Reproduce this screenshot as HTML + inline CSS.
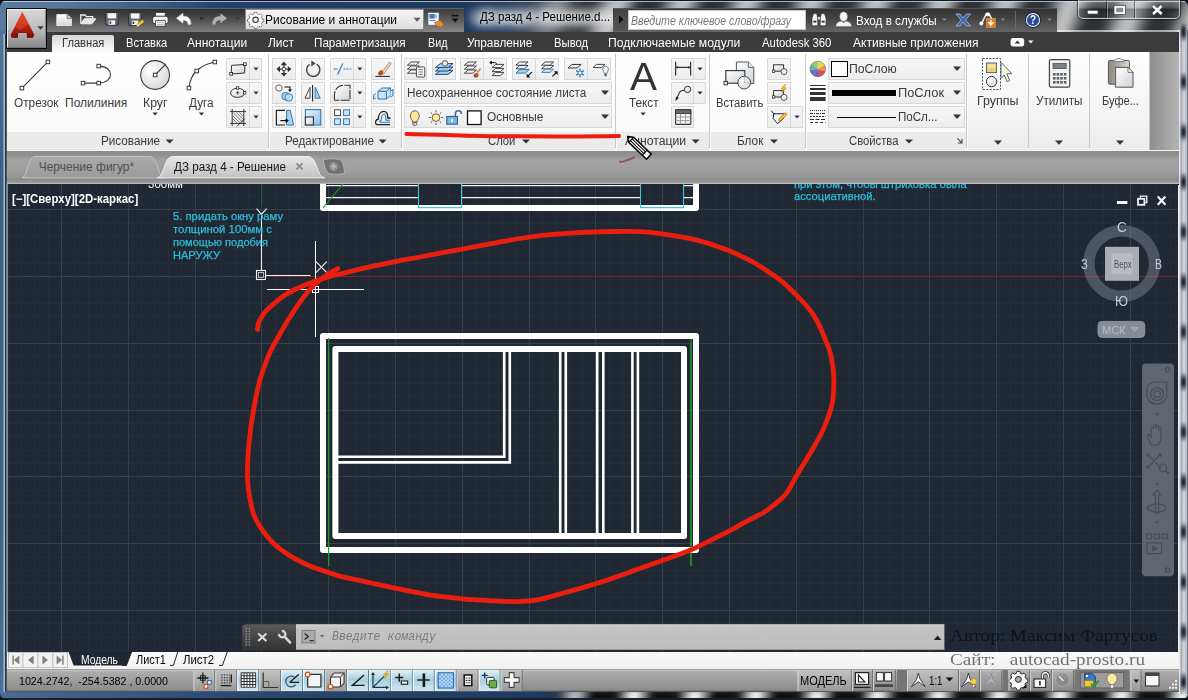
<!DOCTYPE html>
<html lang="ru"><head><meta charset="utf-8"><title>AutoCAD</title>
<style>
html,body{margin:0;padding:0;background:#2a2a2a;}
#root{position:relative;width:1188px;height:700px;overflow:hidden;background:#56769a;font-family:"Liberation Sans",sans-serif;}
#root div{position:absolute;box-sizing:border-box;}
.t{position:absolute;white-space:pre;transform-origin:0 50%;}
svg.ov{position:absolute;left:0;top:0;pointer-events:none;}
#dclip{left:7px;top:184px;width:1171px;height:468px;overflow:hidden;background:#202833;}
#dclip > svg.ov{left:-7px !important;top:-184px !important;}
#dclip > .t{margin-left:-7px;margin-top:-184px;}
.sb{background:linear-gradient(#f6f6f6,#ececec);border:1px solid #d9d9d9;}
.sb2{background:linear-gradient(#f6f6f6,#ececec);border:1px solid #d9d9d9;border-left:none;}
.sep{width:1px;background:#c9c9c9;top:54px;height:94px;}
.sep2{width:1px;background:#ffffff;top:54px;height:94px;}
.ptitle{top:132px;height:18px;background:#ebebeb;}

</style></head>
<body>
<div id="root">
<!-- window frame (aero glass) -->
<div id="fr-top" style="left:0;top:0;width:1188px;height:34px;background:linear-gradient(90deg,#5a7a9e 0,#56769a 60px,#3f5f86 140px,#21406a 230px,#1f3c62 430px,#1d3658 500px,#4f555e 560px,#62666c 640px,#64676c 1188px);"></div>
<div style="left:520px;top:-8px;width:680px;height:48px;overflow:hidden;filter:blur(4px);opacity:.62;background:repeating-linear-gradient(112deg,#0a0a0a 0,#161616 14px,#f0f0f0 29px,#ffffff 39px,#1a1a1a 54px,#0a0a0a 60px);-webkit-mask-image:linear-gradient(90deg,transparent 0,#000 70px);mask-image:linear-gradient(90deg,transparent 0,#000 70px);"></div>
<div style="left:1057px;top:30px;width:123px;height:1.500px;background:rgba(255,255,255,.55);"></div>
<div style="left:0;top:0;width:1188px;height:1px;background:#0d1824;"></div>
<div style="left:1px;top:1px;width:1186px;height:1px;background:rgba(220,232,245,.7);"></div>
<div id="fr-bot" style="left:0;top:691px;width:1188px;height:9px;background:linear-gradient(90deg,#4a6a90 0,#2d4d76 200px,#1d3a60 540px,#555 600px,#666 1188px);"></div>
<div style="left:540px;top:690px;width:660px;height:14px;overflow:hidden;filter:blur(2.5px);background:repeating-linear-gradient(100deg,#0c0c0c 0,#161616 16px,#e8e8e8 30px,#f0f0f0 36px,#141414 52px,#0c0c0c 60px);-webkit-mask-image:linear-gradient(90deg,transparent 0,#000 50px);mask-image:linear-gradient(90deg,transparent 0,#000 50px);"></div>
<div style="left:0;top:698px;width:1188px;height:2px;background:#15202e;"></div>
<div id="fr-right" style="left:1178px;top:30px;width:10px;height:664px;background:linear-gradient(90deg,#eef1f4 0,#e2e5e8 2px,#9a9ea4 3px,#c4c8cc 4.500px,#d0d4d8 6.500px,#a8acb2 8px,#e0e4e8 8.800px,#59626c 9.600px);"></div>
<div style="left:1181px;top:7px;width:5px;height:690px;filter:blur(1.200px);background:repeating-linear-gradient(180deg,rgba(20,24,44,0) 0,rgba(20,24,44,0) 15px,rgba(20,24,44,.95) 23px,rgba(20,24,44,.95) 27px,rgba(20,24,44,0) 35px,rgba(20,24,44,0) 50px);"></div>
<div style="left:0;top:30px;width:7px;height:664px;background:linear-gradient(#54759a 0,#3d628a 120px,#3d607f 300px,#436889 560px,#4b7199 664px);"></div>
<div style="left:3px;top:34px;width:3px;height:658px;background:linear-gradient(90deg,rgba(160,184,208,0) 0,rgba(160,184,208,.95) .800px,rgba(166,190,214,1) 2px,rgba(40,56,70,1) 2.300px,rgba(40,56,70,1) 3px);"></div>
<div style="left:6px;top:34px;width:1px;height:658px;background:#4a5a68;"></div>

<div id="title-glow" style="left:470px;top:9px;width:150px;height:18px;border-radius:9px;background:rgba(255,255,255,.5);filter:blur(5px);"></div>
<!-- caption buttons -->
<div style="left:1078px;top:0;width:102px;height:19px;border:1px solid rgba(230,235,240,.75);border-top:none;border-radius:0 0 5px 5px;background:linear-gradient(rgba(255,255,255,.35),rgba(255,255,255,.12) 45%,rgba(0,0,0,.25) 50%,rgba(60,60,60,.25));box-shadow:0 0 0 1px rgba(0,0,0,.55);"></div>
<div style="left:1105.5px;top:1px;width:1px;height:17px;background:rgba(0,0,0,.5);box-shadow:1px 0 0 rgba(255,255,255,.4);"></div>
<div style="left:1133.5px;top:1px;width:1px;height:17px;background:rgba(0,0,0,.5);box-shadow:1px 0 0 rgba(255,255,255,.4);"></div>

<!-- quick access toolbar -->
<div style="left:47px;top:8px;width:417px;height:24px;background:linear-gradient(#2f2f2f,#464646 35%,#686868 75%,#7c7c7c 100%);border-top:1px solid #59606a;"></div>
<div style="left:245px;top:9px;width:179px;height:21px;background:linear-gradient(#f4f4f4,#dedede);border:1px solid #8a8a8a;"></div>
<div style="left:424px;top:9px;width:40px;height:23px;background:linear-gradient(#3e3e3e,#5a5a5a 45%,#888 100%);"></div>

<!-- info center -->
<div style="left:613px;top:8px;width:444px;height:24px;background:linear-gradient(#333,#434343 40%,#646464);border-top:1px solid #50555c;"></div>
<div style="left:614px;top:9px;width:14px;height:22px;background:linear-gradient(#444,#555);"></div>
<div style="left:628px;top:10px;width:178px;height:20px;background:#fff;border:1px solid #c8c8c8;"></div>
<div style="left:1015px;top:11px;width:1px;height:18px;background:#6a6a6a;"></div>

<!-- ribbon tab row -->
<div style="left:7px;top:31.5px;width:1172px;height:21px;background:#3b3b3b;"></div>
<div style="left:52px;top:35px;width:62px;height:18px;background:linear-gradient(#d6d6d6,#f4f4f4 70%,#fafafa);border-radius:2px 2px 0 0;"></div>

<!-- application button -->
<div style="left:6px;top:8px;width:41px;height:41px;background:#0a0a0a;"></div>
<div style="left:7px;top:9px;width:39px;height:39px;background:linear-gradient(#d6d6d6,#bdbdbd 50%,#8a8a8a);border:1px solid #f2f2f2;border-right-color:#888;border-bottom-color:#777;"></div>

<!-- ribbon body -->
<div style="left:7px;top:52px;width:1172px;height:99px;background:linear-gradient(90deg,#fbfbfb 0,#fbfbfb 1142px,#8e8e8e 1143px,#b4b4b4 1172px);"></div>
<div style="left:7px;top:52px;width:1142px;height:80px;background:linear-gradient(#ffffff,#fafafa);"></div>
<div style="left:7px;top:150px;width:1172px;height:1px;background:#f4f4f4;"></div>
<!-- panel title strips -->
<div class="ptitle" style="left:7px;width:261px;"></div>
<div class="ptitle" style="left:270px;width:131px;"></div>
<div class="ptitle" style="left:403px;width:212px;"></div>
<div class="ptitle" style="left:617px;width:92px;"></div>
<div class="ptitle" style="left:711px;width:94px;"></div>
<div class="ptitle" style="left:807px;width:159px;"></div>
<!-- collapsed panels -->
<div style="left:968px;top:53px;width:60px;height:97px;background:linear-gradient(#ffffff,#f4f4f4 60%,#ececec);"></div>
<div style="left:1029px;top:53px;width:60px;height:97px;background:linear-gradient(#ffffff,#f4f4f4 60%,#ececec);"></div>
<div style="left:1090px;top:53px;width:59px;height:97px;background:linear-gradient(#ffffff,#f4f4f4 60%,#ececec);"></div>
<!-- panel separators -->
<div class="sep" style="left:268px"></div><div class="sep" style="left:401px"></div><div class="sep" style="left:615px"></div>
<div class="sep" style="left:709px"></div><div class="sep" style="left:805px"></div><div class="sep" style="left:966px"></div>
<div class="sep" style="left:1028px"></div><div class="sep" style="left:1089px"></div>

<!-- draw panel small buttons -->
<div class="sb" style="left:226px;top:58px;width:24px;height:22px"></div><div class="sb2" style="left:250px;top:58px;width:12px;height:22px"></div>
<div class="sb" style="left:226px;top:82px;width:24px;height:22px"></div><div class="sb2" style="left:250px;top:82px;width:12px;height:22px"></div>
<div class="sb" style="left:226px;top:106px;width:24px;height:22px"></div><div class="sb2" style="left:250px;top:106px;width:12px;height:22px"></div>
<!-- modify panel -->
<div class="sb" style="left:272px;top:58px;width:24px;height:22px"></div>
<div class="sb" style="left:272px;top:82px;width:24px;height:22px"></div>
<div class="sb" style="left:272px;top:106px;width:24px;height:22px"></div>
<div class="sb" style="left:301px;top:58px;width:24px;height:22px"></div>
<div class="sb" style="left:301px;top:82px;width:24px;height:22px"></div>
<div class="sb" style="left:301px;top:106px;width:24px;height:22px"></div>
<div class="sb" style="left:330px;top:58px;width:24px;height:22px"></div><div class="sb2" style="left:354px;top:58px;width:12px;height:22px"></div>
<div class="sb" style="left:330px;top:82px;width:24px;height:22px"></div><div class="sb2" style="left:354px;top:82px;width:12px;height:22px"></div>
<div class="sb" style="left:330px;top:106px;width:24px;height:22px"></div><div class="sb2" style="left:354px;top:106px;width:12px;height:22px"></div>
<div class="sb" style="left:371px;top:58px;width:24px;height:22px"></div>
<div class="sb" style="left:371px;top:82px;width:24px;height:22px"></div>
<div class="sb" style="left:371px;top:106px;width:24px;height:22px"></div>
<!-- layers panel -->
<div class="sb" style="left:404px;top:58px;width:23px;height:22px"></div>
<div class="sb" style="left:432px;top:58px;width:24px;height:22px"></div>
<div class="sb" style="left:460px;top:58px;width:24px;height:22px"></div><div class="sb2" style="left:484px;top:58px;width:23px;height:22px"></div>
<div class="sb" style="left:512px;top:58px;width:24px;height:22px"></div><div class="sb2" style="left:536px;top:58px;width:23px;height:22px"></div>
<div class="sb" style="left:564px;top:58px;width:24px;height:22px"></div><div class="sb2" style="left:588px;top:58px;width:23px;height:22px"></div>
<div class="sb" style="left:404px;top:82px;width:208px;height:22px"></div>
<div class="sb" style="left:404px;top:106px;width:208px;height:22px"></div>
<!-- annotation panel -->
<div class="sb" style="left:671px;top:58px;width:23px;height:22px"></div><div class="sb2" style="left:694px;top:58px;width:12px;height:22px"></div>
<div class="sb" style="left:671px;top:82px;width:23px;height:22px"></div><div class="sb2" style="left:694px;top:82px;width:12px;height:22px"></div>
<div class="sb" style="left:671px;top:106px;width:23px;height:22px"></div>
<!-- block panel -->
<div class="sb" style="left:767px;top:58px;width:24px;height:22px"></div>
<div class="sb" style="left:767px;top:82px;width:24px;height:22px"></div>
<div class="sb" style="left:767px;top:106px;width:24px;height:22px"></div><div class="sb2" style="left:791px;top:106px;width:12px;height:22px"></div>
<!-- properties panel -->
<div class="sb" style="left:828px;top:58px;width:137px;height:22px"></div>
<div class="sb" style="left:828px;top:82px;width:137px;height:22px"></div>
<div class="sb" style="left:828px;top:106px;width:137px;height:22px"></div>
<div style="left:830.5px;top:61px;width:17px;height:16px;background:#fff;border:1px solid #000;"></div>
<div style="left:832px;top:90px;width:64px;height:6px;background:#000;"></div>
<div style="left:837px;top:117px;width:59px;height:1px;background:#000;"></div>

<!-- file tab bar -->
<div style="left:7px;top:151px;width:1172px;height:34px;background:linear-gradient(#8c8c8c 0,#909090 4px,#a2a2a2 9px,#9e9e9e 20px,#949494 27px,#8a8a8a 28px,#959595 31px,#9c9c9c 31.500px,#bdbdbd 32px,#b4b4b4 33.300px,#10151c 33.500px);"></div>

<!-- layout tab strip -->
<div style="left:7px;top:652px;width:1172px;height:18px;background:linear-gradient(#fafafa,#f0f0f0);"></div>
<!-- status bar -->
<div style="left:7px;top:669px;width:1172px;height:23px;background:linear-gradient(#7b7b7b 0,#c6c6c6 1px,#acacac 3px,#8c8c8c 21px,#6a6a6a 22px,#3c4854 23px);"></div>

<div id="dleft" style="left:6px;top:184px;width:2px;height:468px;background:linear-gradient(90deg,#5a646c,#939da1);z-index:3;"></div>

<div id="dclip">
<svg class="ov" width="1188" height="700" viewBox="0 0 1188 700" style="left:0;top:0">
<path d="M8.0 184V652 M21.3 184V652 M34.7 184V652 M48.0 184V652 M74.8 184V652 M88.1 184V652 M101.5 184V652 M114.8 184V652 M141.6 184V652 M154.9 184V652 M168.3 184V652 M181.6 184V652 M208.4 184V652 M221.7 184V652 M235.1 184V652 M248.4 184V652 M275.2 184V652 M288.5 184V652 M301.9 184V652 M315.2 184V652 M342.0 184V652 M355.3 184V652 M368.7 184V652 M382.0 184V652 M408.8 184V652 M422.1 184V652 M435.5 184V652 M448.8 184V652 M475.6 184V652 M488.9 184V652 M502.3 184V652 M515.6 184V652 M542.4 184V652 M555.7 184V652 M569.1 184V652 M582.4 184V652 M609.2 184V652 M622.5 184V652 M635.9 184V652 M649.2 184V652 M676.0 184V652 M689.3 184V652 M702.7 184V652 M716.0 184V652 M742.8 184V652 M756.1 184V652 M769.5 184V652 M782.8 184V652 M809.6 184V652 M822.9 184V652 M836.3 184V652 M849.6 184V652 M876.4 184V652 M889.7 184V652 M903.1 184V652 M916.4 184V652 M943.2 184V652 M956.5 184V652 M969.9 184V652 M983.2 184V652 M1010.0 184V652 M1023.3 184V652 M1036.7 184V652 M1050.0 184V652 M1076.8 184V652 M1090.1 184V652 M1103.5 184V652 M1116.8 184V652 M1143.6 184V652 M1156.9 184V652 M1170.3 184V652 M7 196.2H1178 M7 223.0H1178 M7 236.3H1178 M7 249.7H1178 M7 263.0H1178 M7 289.8H1178 M7 303.1H1178 M7 316.5H1178 M7 329.8H1178 M7 356.6H1178 M7 369.9H1178 M7 383.3H1178 M7 396.6H1178 M7 423.4H1178 M7 436.7H1178 M7 450.1H1178 M7 463.4H1178 M7 490.2H1178 M7 503.5H1178 M7 516.9H1178 M7 530.2H1178 M7 557.0H1178 M7 570.3H1178 M7 583.7H1178 M7 597.0H1178 M7 623.8H1178 M7 637.1H1178 M7 650.5H1178" stroke="#252d38" stroke-width="1" shape-rendering="crispEdges" fill="none"/>
<path d="M61.4 184V652 M128.2 184V652 M195.0 184V652 M261.8 184V652 M328.6 184V652 M395.4 184V652 M462.2 184V652 M529.0 184V652 M595.8 184V652 M662.6 184V652 M729.4 184V652 M796.2 184V652 M863.0 184V652 M929.8 184V652 M996.6 184V652 M1063.4 184V652 M1130.2 184V652 M7 209.6H1178 M7 276.4H1178 M7 343.2H1178 M7 410.0H1178 M7 476.8H1178 M7 543.6H1178 M7 610.4H1178" stroke="#36404b" stroke-width="1" shape-rendering="crispEdges" fill="none"/>
<path d="M266 276.400H1178" stroke="#7c2526" stroke-width="1"/>
<path d="M328.600 338V566M691 338V566" stroke="#1f9a2a" stroke-width="1.200"/>
<path d="M261.800 184V205" stroke="#1c6a2a" stroke-width="1"/>
<path d="M323 180V208H696V180" fill="none" stroke="#fff" stroke-width="6" stroke-linejoin="round"/>
<path d="M326 185.600H418M461.600 185.600H640M684 185.600H693M326 197.600H418M461.600 197.600H640M684 197.600H693" stroke="#f4f4f4" stroke-width="1.200"/>
<path d="M418.500 180V207.600H461.500V180M640.500 180V207.600H683.500V180" fill="none" stroke="#3fc6dc" stroke-width="1.100"/>
<path d="M343 184L323 208" stroke="#1f9a2a" stroke-width="1.100"/>
<rect x="323" y="336" width="373" height="214" fill="none" stroke="#fff" stroke-width="6" stroke-linejoin="round"/>
<rect x="335.400" y="349" width="348.600" height="187" fill="none" stroke="#fff" stroke-width="6" stroke-linejoin="round"/>
<path d="M504.200 352V456.800H338M509.800 352V462.400H338" fill="none" stroke="#fff" stroke-width="2.600"/>
<path d="M560.200 352V534M565.800 352V534M597.200 352V534M603.300 352V534M632.400 352V534M637.900 352V534" stroke="#fff" stroke-width="2.600"/>
<path d="M328.600 338V566M691 344V566" stroke="#1f9a2a" stroke-width="1.100"/>
<g stroke="#f2f2f2" stroke-width="1.100" fill="none"><rect x="256.500" y="270.500" width="9" height="9"/><rect x="258.500" y="272.500" width="5" height="5" stroke-width=".7"/><path d="M261.500 270V218M266 275.500H310.600"/><path d="M256.600 208.600L261.500 214.400L266.600 208.600M261.500 214.400V219"/><path d="M316 261.600L326.800 272.600M326.800 261.600L316 272.600"/></g>
<g stroke="#fff" stroke-width="1" fill="none"><path d="M315.500 241V337M267 289.500H364"/><rect x="312.500" y="286.500" width="6" height="6"/></g>
<path d="M257.5 329.5 C257.7 328.4 257.9 324.9 258.5 323.0 C259.1 321.1 259.8 320.0 261.0 318.0 C262.2 316.0 264.0 313.2 266.0 311.0 C268.0 308.8 270.3 306.8 273.0 304.5 C275.7 302.2 278.8 299.2 282.0 297.0 C285.2 294.8 288.3 292.9 292.0 291.0 C295.7 289.1 300.0 287.2 304.0 285.5 C308.0 283.8 311.7 282.5 316.0 281.0 C320.3 279.5 325.5 277.8 330.0 276.5 C334.5 275.2 337.7 274.6 343.0 273.3 C348.3 272.0 355.7 270.1 362.0 268.6 C368.3 267.2 374.7 265.9 381.0 264.6 C387.3 263.3 393.5 261.9 400.0 260.6 C406.5 259.3 412.5 258.4 420.0 257.0 C427.5 255.6 436.4 253.8 445.0 252.2 C453.6 250.6 462.7 249.0 471.4 247.4 C480.1 245.8 488.4 244.2 497.0 242.6 C505.6 241.0 514.8 239.2 522.8 238.0 C530.8 236.8 537.6 236.0 545.0 235.2 C552.4 234.4 558.8 233.8 567.0 233.3 C575.2 232.8 585.7 232.3 594.0 232.0 C602.3 231.7 609.4 231.6 617.0 231.5 C624.6 231.4 632.9 231.4 639.7 231.7 C646.5 232.0 652.2 232.6 658.0 233.3 C663.8 234.0 669.7 235.0 674.7 235.8 C679.7 236.6 683.5 237.3 688.0 238.2 C692.5 239.1 697.1 240.2 701.6 241.4 C706.1 242.6 710.5 244.1 715.0 245.6 C719.5 247.1 724.1 248.8 728.6 250.6 C733.1 252.4 737.5 254.5 742.0 256.6 C746.5 258.8 751.0 260.9 755.5 263.5 C760.0 266.1 764.5 269.1 769.0 272.2 C773.5 275.2 777.9 278.1 782.4 281.8 C786.9 285.5 791.5 290.0 796.0 294.6 C800.5 299.2 805.9 304.9 809.4 309.3 C812.9 313.7 814.8 317.0 817.0 321.0 C819.2 325.0 821.0 329.3 822.8 333.5 C824.6 337.7 826.6 342.2 828.0 346.0 C829.4 349.8 830.2 352.3 831.0 356.0 C831.8 359.7 832.5 364.0 833.0 368.0 C833.5 372.0 833.7 376.2 833.8 380.0 C833.9 383.8 833.8 387.3 833.6 391.0 C833.4 394.7 833.2 398.3 832.5 402.0 C831.8 405.7 830.7 409.4 829.6 413.0 C828.5 416.6 827.1 420.1 825.7 423.6 C824.3 427.1 822.8 430.4 821.0 434.0 C819.2 437.6 817.3 440.9 815.0 445.0 C812.7 449.1 809.7 454.0 807.0 458.5 C804.3 463.0 801.9 466.6 798.7 472.0 C795.5 477.4 790.8 486.7 788.0 491.0 C785.2 495.3 784.2 495.8 782.0 498.0 C779.8 500.2 777.5 502.0 774.5 504.4 C771.5 506.8 767.8 510.0 763.7 512.5 C759.6 515.0 755.9 516.5 750.0 519.6 C744.1 522.8 734.9 528.1 728.6 531.4 C722.3 534.7 717.4 536.9 712.0 539.6 C706.6 542.3 701.5 545.1 696.0 547.6 C690.5 550.1 684.8 552.2 679.0 554.4 C673.2 556.6 668.5 558.3 661.0 561.0 C653.5 563.7 642.9 567.4 634.0 570.6 C625.1 573.8 615.2 577.4 607.4 580.0 C599.6 582.6 593.7 584.4 587.0 586.4 C580.3 588.4 572.7 590.4 567.0 592.0 C561.3 593.6 557.5 594.8 553.0 596.0 C548.5 597.2 544.5 598.5 540.0 599.4 C535.5 600.3 530.5 600.8 526.0 601.2 C521.5 601.6 518.5 601.7 512.8 601.6 C507.1 601.5 498.7 601.1 492.0 600.8 C485.3 600.5 479.1 600.2 472.4 599.7 C465.7 599.2 458.7 598.3 452.0 597.6 C445.3 596.9 438.8 596.4 432.0 595.4 C425.2 594.4 417.7 592.8 411.0 591.4 C404.3 590.0 398.3 588.7 391.6 587.3 C384.9 585.9 377.8 584.4 371.0 583.0 C364.2 581.6 356.5 579.9 351.0 578.7 C345.5 577.5 342.0 576.7 338.0 575.6 C334.0 574.5 330.7 573.2 327.0 572.0 C323.3 570.8 319.6 569.5 316.0 568.2 C312.4 566.9 309.1 565.7 305.4 564.0 C301.7 562.3 297.6 560.2 294.0 558.2 C290.4 556.2 287.2 554.0 284.0 551.8 C280.8 549.6 277.7 547.3 275.0 544.8 C272.3 542.3 270.2 540.0 267.7 537.0 C265.2 534.0 262.3 530.2 260.0 526.6 C257.7 523.0 255.6 519.5 254.0 515.4 C252.4 511.3 251.5 506.5 250.6 502.0 C249.7 497.5 248.8 492.7 248.3 488.5 C247.8 484.3 247.6 480.6 247.5 477.0 C247.4 473.4 247.4 471.0 247.5 467.0 C247.6 463.0 247.9 457.5 248.2 453.0 C248.5 448.5 248.9 444.5 249.4 440.0 C249.9 435.5 250.4 430.4 251.0 426.0 C251.6 421.6 252.2 418.3 253.0 413.5 C253.8 408.7 254.9 402.4 256.0 397.0 C257.1 391.6 258.2 386.2 259.6 381.0 C261.0 375.8 262.8 370.9 264.6 366.0 C266.4 361.1 268.3 356.1 270.4 351.6 C272.5 347.1 274.7 343.1 277.0 339.0 C279.3 334.9 281.7 330.8 284.0 327.0 C286.3 323.2 288.4 319.5 290.6 316.0 C292.8 312.5 295.2 309.0 297.4 305.8 C299.6 302.6 301.8 299.5 304.0 296.6 C306.2 293.7 308.7 290.6 310.8 288.3 C312.9 286.0 314.6 284.6 316.4 283.0 C318.2 281.4 319.5 280.5 321.6 278.9 C323.7 277.3 326.3 275.3 329.0 273.6 C331.7 271.9 336.3 269.4 337.8 268.6" fill="none" stroke="#ea1e0e" stroke-width="4.800" stroke-linecap="round" stroke-linejoin="round"/>
<circle cx="1121.700" cy="263.500" r="32.800" fill="none" stroke="#808894" stroke-opacity=".47" stroke-width="11.400"/>
<rect x="1105" y="246.800" width="34" height="34" fill="#a9acb1"/><rect x="1111.400" y="253.200" width="21.200" height="21.200" fill="#b9bcc1"/>
<rect x="1098" y="321.400" width="46.800" height="16" rx="4" fill="#868c95" stroke="#9aa0a8" stroke-width=".8"/><path d="M1130.600 327.400h7.600l-3.800 4.400z" fill="#9ca2aa" stroke="#aeb4bc" stroke-width=".6"/>
<rect x="1117" y="201" width="10.400" height="3" fill="#f4f4f4"/><rect x="1138" y="198.800" width="6.400" height="6" fill="none" stroke="#f4f4f4" stroke-width="1.800"/><path d="M1140.400 198V196.200H1146.800V202.600H1145" fill="none" stroke="#f4f4f4" stroke-width="1.300"/><path d="M1157.800 196.600L1165.400 204.800M1165.400 196.600L1157.800 204.800" stroke="#f4f4f4" stroke-width="2.200"/>
<rect x="1142" y="363.600" width="32" height="212.600" rx="4" fill="#5f666f"/>
<g fill="none" stroke="#474e57" stroke-width="1.200">
<circle cx="1167.600" cy="369.600" r="2.200"/><circle cx="1167.600" cy="570" r="2.200"/>
<path d="M1146.800 390c0-6 4-8 10-8h10v12c0 6-4 10-10 10s-10-4-10-10z"/><circle cx="1157" cy="394" r="6.400"/><circle cx="1157" cy="394" r="3.400"/>
<path d="M1149 440c-2-4-2-6 0-6l2 3v-8c0-2 2.600-2 2.600 0v-3c0-2 2.600-2 2.600 0v3-2c0-2 2.600-2 2.600 0v4-2c0-2 2.400-2 2.400 0v8c0 4-1 6-3 8h-7z"/>
<path d="M1147 454l14 14M1161 454l-14 14M1147 454h3M1147 454v3M1161 454h-3M1161 454v3M1147 468h3M1147 468v-3"/><circle cx="1163" cy="468" r="3.600"/><path d="M1165.600 470.600l3 3" stroke-width="2"/>
<path d="M1157 490l-4 5h2.400v18h3.200v-18h2.400z"/><ellipse cx="1157" cy="508" rx="9" ry="4"/><path d="M1148 506l-1 3 3 .6"/>
<rect x="1146.600" y="534" width="5" height="4.600"/><rect x="1154.400" y="534" width="5" height="4.600"/><rect x="1162.200" y="534" width="5" height="4.600"/><rect x="1147" y="543" width="14.600" height="10.600"/>
</g><g fill="#474e57"><path d="M1155 413.600h4l-2 2.400zM1155 483.600h4l-2 2.400zM1155 521.600h4l-2 2.400zM1152 545l6.400 3.400-6.400 3.400z"/></g>
<defs><linearGradient id="gCmd" x1="0" y1="0" x2="0" y2="1"><stop offset="0" stop-color="#5a5a5a"/><stop offset=".5" stop-color="#454545"/><stop offset="1" stop-color="#333"/></linearGradient><linearGradient id="gCmd2" x1="0" y1="0" x2="0" y2="1"><stop offset="0" stop-color="#d2d2d2"/><stop offset=".15" stop-color="#c4c4c4"/><stop offset="1" stop-color="#bcbcbc"/></linearGradient></defs>
<path d="M242.200 650V628.200Q242.200 624.200 246.200 624.200H298V650Z" fill="url(#gCmd)"/>
<rect x="296" y="624.200" width="648.400" height="25.800" fill="url(#gCmd2)"/><path d="M296 649.500H944.400" stroke="#9a9a9a" stroke-width="1"/>
<g fill="#8e8e8e"><rect x="245.6" y="627.8" width="1.500" height="1.500"/><rect x="245.6" y="630.5" width="1.500" height="1.500"/><rect x="245.6" y="633.2" width="1.500" height="1.500"/><rect x="245.6" y="635.9" width="1.500" height="1.500"/><rect x="245.6" y="638.6" width="1.500" height="1.500"/><rect x="245.6" y="641.3" width="1.500" height="1.500"/><rect x="245.6" y="644.0" width="1.500" height="1.500"/><rect x="248.6" y="627.8" width="1.500" height="1.500"/><rect x="248.6" y="630.5" width="1.500" height="1.500"/><rect x="248.6" y="633.2" width="1.500" height="1.500"/><rect x="248.6" y="635.9" width="1.500" height="1.500"/><rect x="248.6" y="638.6" width="1.500" height="1.500"/><rect x="248.6" y="641.3" width="1.500" height="1.500"/><rect x="248.6" y="644.0" width="1.500" height="1.500"/></g>
<path d="M258.200 633.400L266.400 641M266.400 633.400L258.200 641" stroke="#dcdcdc" stroke-width="2.100"/>
<path d="M284.400 636.400L290 642.400" stroke="#d8d8d8" stroke-width="2.700" stroke-linecap="round"/><path d="M281.900 631A3.200 3.200 0 1 1 279 633.900" fill="none" stroke="#d8d8d8" stroke-width="2.300"/>
<rect x="302" y="630.500" width="13" height="12.400" fill="#aaaaaa" stroke="#7e7e7e" stroke-width="1"/><path d="M304.600 633.400l3.800 3-3.800 3M309.600 640.600h4" stroke="#2a2a2a" stroke-width="1.300" fill="none"/><path d="M319.800 635h4.600l-2.300 2.800z" fill="#707070"/>
<path d="M933.800 640h7.600l-3.800-4.400z" fill="#222"/>
</svg>
<span class="t" style="left:11.8px;top:192px;font-family:'Liberation Sans', sans-serif;font-size:12px;line-height:14px;color:#ffffff;transform:scaleX(0.9494);font-weight:bold;">[−][Сверху][2D-каркас]</span>
<span class="t" style="left:172.7px;top:210px;font-family:'Liberation Sans', sans-serif;font-size:10.5px;line-height:12px;color:#2fbddb;transform:scaleX(1.0723);-webkit-text-stroke:.25px #2fbddb;">5. придать окну раму</span>
<span class="t" style="left:172.7px;top:223px;font-family:'Liberation Sans', sans-serif;font-size:10.5px;line-height:12px;color:#2fbddb;transform:scaleX(1.0822);-webkit-text-stroke:.25px #2fbddb;">толщиной 100мм с</span>
<span class="t" style="left:172.7px;top:236px;font-family:'Liberation Sans', sans-serif;font-size:10.5px;line-height:12px;color:#2fbddb;transform:scaleX(1.0519);-webkit-text-stroke:.25px #2fbddb;">помощью подобия</span>
<span class="t" style="left:172.7px;top:249px;font-family:'Liberation Sans', sans-serif;font-size:10.5px;line-height:12px;color:#2fbddb;transform:scaleX(1.0532);-webkit-text-stroke:.25px #2fbddb;">НАРУЖУ</span>
<span class="t" style="left:148.0px;top:178px;font-family:'Liberation Sans', sans-serif;font-size:10.5px;line-height:12px;color:#ffffff;transform:scaleX(1.0948);">300мм</span>
<span class="t" style="left:793.8px;top:178px;font-family:'Liberation Sans', sans-serif;font-size:10.5px;line-height:12px;color:#2fbddb;transform:scaleX(1.0654);-webkit-text-stroke:.25px #2fbddb;">при этом, чтобы штриховка была</span>
<span class="t" style="left:793.8px;top:190px;font-family:'Liberation Sans', sans-serif;font-size:10.5px;line-height:12px;color:#2fbddb;transform:scaleX(1.0671);-webkit-text-stroke:.25px #2fbddb;">ассоциативной.</span>
<span class="t" style="left:1117.0px;top:219px;font-family:'Liberation Sans', sans-serif;font-size:14px;line-height:16px;color:#c9ccd1;transform:scaleX(0.9679);">С</span>
<span class="t" style="left:1081.0px;top:256px;font-family:'Liberation Sans', sans-serif;font-size:14px;line-height:16px;color:#c9ccd1;transform:scaleX(0.8030);">З</span>
<span class="t" style="left:1155.0px;top:256px;font-family:'Liberation Sans', sans-serif;font-size:14px;line-height:16px;color:#c9ccd1;transform:scaleX(0.7492);">В</span>
<span class="t" style="left:1115.0px;top:293px;font-family:'Liberation Sans', sans-serif;font-size:14px;line-height:16px;color:#c9ccd1;transform:scaleX(0.9183);">Ю</span>
<span class="t" style="left:1113.5px;top:259px;font-family:'Liberation Sans', sans-serif;font-size:10px;line-height:11px;color:#4e5157;transform:scaleX(0.7713);">Верх</span>
<span class="t" style="left:1102.0px;top:324px;font-family:'Liberation Sans', sans-serif;font-size:11px;line-height:12px;color:#b9bec6;">МСК</span>
</div>
<svg class="ov" width="1188" height="700" viewBox="0 0 1188 700">
<defs>
<linearGradient id="gA" x1="0" y1="0" x2="0" y2="1"><stop offset="0" stop-color="#e84c2a"/><stop offset=".45" stop-color="#c42a16"/><stop offset="1" stop-color="#7e1006"/></linearGradient>
<linearGradient id="gW" x1="0" y1="0" x2="0" y2="1"><stop offset="0" stop-color="#ffffff"/><stop offset="1" stop-color="#d4d4d4"/></linearGradient>
<linearGradient id="gB" x1="0" y1="0" x2="1" y2="1"><stop offset="0" stop-color="#eaf4fb"/><stop offset="1" stop-color="#8cc0e6"/></linearGradient>
<linearGradient id="gG" x1="0" y1="0" x2="1" y2="1"><stop offset="0" stop-color="#ffffff"/><stop offset="1" stop-color="#cfd3d8"/></linearGradient>
<radialGradient id="gCirc" cx=".35" cy=".35" r=".8"><stop offset="0" stop-color="#ffffff"/><stop offset="1" stop-color="#d0d3d8"/></radialGradient>
</defs>
<!-- App logo A -->
<g>
<path d="M22.4 12 L34.2 34.6 L33 37.8 L27 37.8 L26.6 33 L18.2 33 L17.8 37.8 L11.8 37.8 L10.8 34.6 Z" fill="url(#gA)"/>
<path d="M22.4 12 L28.5 24 L20 30 L15 27 Z" fill="#e8482a" opacity=".55"/>
<path d="M10.8 34.6 L17.8 33.4 L17.8 37.8 L11.8 37.8Z M34.2 34.6 L27 33.4 L27 37.8 L33 37.8Z" fill="#7a1006" opacity=".7"/>
<path d="M37.2 26.3 L43.8 26.3 L40.5 29.8Z" fill="#3c3c3c"/>
</g>
<!-- QAT: new -->
<path d="M56.8 14.6 L67 14.6 L71.4 18.6 L71.4 25.6 L56.8 25.6Z" fill="url(#gW)" stroke="#f8f8f8" stroke-width=".8"/>
<path d="M67 14.6 L67 18.6 L71.4 18.6" fill="#cfcfcf" stroke="#555" stroke-width=".7"/>
<!-- open -->
<path d="M80.8 23.6 L80.8 15 L85 15 L86.4 16.6 L92.6 16.6 L92.6 18.6" fill="none" stroke="#f0f0f0" stroke-width="1.3"/>
<path d="M81 23.8 L84.4 18.8 L95.6 18.8 L91.8 23.8Z" fill="#e6e6e6" stroke="#fafafa" stroke-width="1"/>
<!-- save -->
<rect x="105.4" y="12.6" width="13" height="12.6" rx="1.2" fill="#5d6270" stroke="#2e3038" stroke-width=".9"/>
<rect x="107.6" y="13.2" width="8.6" height="5.2" fill="#f4f6fa"/>
<rect x="108.6" y="20.4" width="6.6" height="4.4" fill="#f4f4f4"/><rect x="109.6" y="21.4" width="1.6" height="2.4" fill="#333"/>
<!-- save as -->
<rect x="128.6" y="12.8" width="13" height="12.6" rx="1.2" fill="#5d6270" stroke="#2e3038" stroke-width=".9"/>
<rect x="130.8" y="13.4" width="8.6" height="5.2" fill="#f4f6fa"/>
<rect x="131.8" y="20.6" width="6.6" height="4.4" fill="#f4f4f4"/><rect x="132.6" y="21.6" width="1.6" height="2.4" fill="#333"/>
<path d="M136.6 26.6 L137.4 23.6 L142.4 19.6 L144.4 21.8 L139.4 26Z" fill="#f2c13c" stroke="#8a5a10" stroke-width=".6"/>
<path d="M136.6 26.6 L137.4 23.6 L139.4 26Z" fill="#f6e6c0"/>
<!-- print -->
<rect x="155.6" y="12.4" width="9.6" height="4.6" fill="#f8f8f8" stroke="#333" stroke-width=".8"/>
<rect x="152.6" y="16.2" width="15.6" height="7.6" rx="2.4" fill="#f4f4f4" stroke="#2a2a2a" stroke-width=".9"/>
<rect x="155.6" y="20.6" width="9.6" height="5.6" fill="#fdfdfd" stroke="#333" stroke-width=".8"/>
<path d="M157 22.6h6.8M157 24.4h6.8" stroke="#999" stroke-width=".7"/>
<!-- undo -->
<path d="M176.4 18.2 L183 13.2 L183 16.2 C188 16 191 18.6 191 24.4 L188 24.4 C187.8 21 186 20 183 20.2 L183 23.2Z" fill="#fbfbfb" stroke="#d8d8d8" stroke-width=".5"/>
<path d="M199.2 17.6h4.6l-2.3 2.6z" fill="#2a2a2a"/>
<!-- redo -->
<path d="M227 18.2 L220.4 13.2 L220.4 16.2 C215.4 16 212.4 18.6 212.4 24.4 L215.4 24.4 C215.6 21 217.4 20 220.4 20.2 L220.4 23.2Z" fill="#b2b2b2"/>
<path d="M235.2 17.6h4.6l-2.3 2.6z" fill="#3a3a3a"/>
<!-- gear -->
<g transform="translate(255.6 19.8)" fill="none" stroke="#3a3a3a">
<path d="M-1.3-7.4h2.6l.5 1.7 1.5.6 1.6-.9 1.8 1.8-.9 1.6.6 1.5 1.7.5v2.6l-1.7.5-.6 1.5.9 1.6-1.8 1.8-1.6-.9-1.5.6-.5 1.7h-2.6l-.5-1.7-1.5-.6-1.6.9-1.8-1.8.9-1.6-.6-1.5-1.7-.5v-2.6l1.7-.5.6-1.5-.9-1.6 1.8-1.8 1.6.9 1.5-.6z" stroke-width=".9" fill="#fafafa" stroke-dasharray="1.2 .7"/>
<circle r="2.7" stroke-width="1.1" fill="#e8e8e8"/>
</g>
<path d="M413.600 17.800h7l-3.500 4z" fill="#5a5a5a"/>
<!-- workspace customise icon -->
<rect x="428" y="12.6" width="11" height="12.6" fill="#fdfdfd" stroke="#5a6a80" stroke-width=".8"/>
<rect x="429.4" y="14" width="5.4" height="4.6" fill="#4a78b8"/><path d="M436 14.4v4M429.6 20.4h6" stroke="#4a78b8" stroke-width="1"/>
<path d="M434.6 22.4 L440.6 20.4 L444 24.6 L441 27.6 L436 25.8Z" fill="#e89030" stroke="#9a5210" stroke-width=".6"/>
<path d="M451.6 15.6h7" stroke="#111" stroke-width="1.6"/><path d="M451.6 18.6h7l-3.5 3.8z" fill="#111"/>
<!-- info center arrow -->
<path d="M619 15.6l4.4 4-4.4 4z" fill="#0a0a0a"/>
<!-- binoculars -->
<g fill="#f4f4f4" stroke="#222" stroke-width=".6">
<path d="M812 25.8 L812 18 L813.6 13.6 L816.6 13.6 L817.8 18 L817.8 25.8Z"/>
<path d="M820.2 25.8 L820.2 18 L821.4 13.6 L824.4 13.6 L826 18 L826 25.8Z"/>
<rect x="817.4" y="16.4" width="3.2" height="3.6" fill="#ddd"/>
</g>
<path d="M813.4 21.6h3M821.6 21.6h3" stroke="#222" stroke-width="1.6"/>
<!-- user -->
<g fill="#f6f6f6" stroke="#bbb" stroke-width=".4">
<ellipse cx="843.6" cy="16.6" rx="3.8" ry="4.6"/>
<path d="M836 26.2 C836.4 22.6 839 21.6 841.4 21.2 L843.6 23 L845.8 21.2 C848.4 21.6 851 22.6 851.4 26.2Z"/>
</g>
<path d="M942 18.4h4.6l-2.3 2.6z" fill="#8a8a8a"/>
<!-- exchange X -->
<path d="M956 14 L960.2 14 L963.2 18 L966.4 14 L970.6 14 L965.6 20 L970.6 26 L966.4 26 L963.2 22 L960.2 26 L956 26 L961 20Z" fill="#3a6ab0" stroke="#e8f0fa" stroke-width=".5"/>
<!-- A360 -->
<path d="M981 24.8 L986.4 13.6 L989 13.6 L994.4 24.8" fill="none" stroke="#e8e8e8" stroke-width="1.6"/>
<circle cx="981.4" cy="23.6" r="2" fill="#fff"/><circle cx="987.8" cy="14.4" r="2" fill="#fff"/>
<rect x="986.6" y="18.6" width="8.6" height="8.6" fill="#e87818" stroke="#f8c080" stroke-width=".5"/>
<path d="M990.9 20v3.4M988.8 22.8l2.1 2.4 2.1-2.4z" stroke="#fff" stroke-width="1.3" fill="#fff"/>
<path d="M1000.8 18.4h4.6l-2.3 2.6z" fill="#8a8a8a"/>
<!-- help -->
<circle cx="1033" cy="20" r="7.6" fill="#fdfdfd" stroke="#1c2a4a" stroke-width="1.1"/>
<circle cx="1033" cy="20" r="6.100" fill="#2c4c9a"/>
<path d="M1047.2 18.4h4.6l-2.3 2.6z" fill="#8a8a8a"/>
<!-- caption glyphs -->
<rect x="1087.4" y="10.4" width="10.6" height="3.6" rx=".8" fill="#fff" stroke="#4a4a4a" stroke-width=".7"/>
<rect x="1115.200" y="6.800" width="9" height="6.400" fill="#8a8a8a" stroke="#fcfcfc" stroke-width="2"/><rect x="1113.900" y="5.500" width="11.600" height="9" fill="none" stroke="#3a3a3a" stroke-width=".6"/>
<path d="M1153 6 L1161.6 14 M1161.6 6 L1153 14" stroke="#444" stroke-width="3.8"/><path d="M1153 6 L1161.6 14 M1161.6 6 L1153 14" stroke="#fff" stroke-width="2.4"/>
<!-- ribbon minimize toggle -->
<rect x="1010.6" y="38" width="13.6" height="8.4" rx="2.6" fill="#fbfbfb"/><path d="M1014.6 43.6l2.8-3 2.8 3z" fill="#333"/>
<path d="M1028 40.6h5.6l-2.8 3z" fill="#f4f4f4"/>
<!-- ===== Draw panel big icons ===== -->
<g stroke="#3c3c3c" stroke-width="1.1" fill="none">
<path d="M21.9 88.1 L47.9 61.9"/>
<path d="M83 83.1 L98.7 83.1 C114.5 83.1 114.5 66.1 98.7 66.1"/>
<circle cx="155.1" cy="75" r="14.4" fill="url(#gCirc)"/>
<path d="M155.1 75 L166 63.8"/>
<path d="M188.9 88 C190 79 193 74 196.7 71 C201 66.5 207 63.5 214.8 62"/>
</g>
<g fill="#fff" stroke="#2a2a2a" stroke-width=".9">
<rect x="20.1" y="86.3" width="3.6" height="3.6"/><rect x="46.1" y="60.1" width="3.6" height="3.6"/>
<rect x="81.2" y="81.3" width="3.6" height="3.6"/><rect x="96.9" y="81.3" width="3.6" height="3.6"/><rect x="96.9" y="64.3" width="3.6" height="3.6"/>
<rect x="153.3" y="73.2" width="3.6" height="3.6"/>
<rect x="187.1" y="86.2" width="3.6" height="3.6"/><rect x="194.9" y="69.2" width="3.6" height="3.6"/><rect x="213" y="60.2" width="3.6" height="3.6"/>
</g>
<g fill="#333">
<path d="M152.4 112.6h5.4l-2.7 2.8z"/><path d="M198.8 112.6h5.4l-2.7 2.8z"/><path d="M640.4 112.6h5.4l-2.7 2.8z"/>
<!-- split arrows draw -->
<path d="M253.4 67.6h5.2l-2.6 3z"/><path d="M253.4 91.6h5.2l-2.6 3z"/><path d="M253.4 115.6h5.2l-2.6 3z"/>
<path d="M357.2 67.6h5.2l-2.6 3z"/><path d="M357.2 91.6h5.2l-2.6 3z"/><path d="M357.2 115.6h5.2l-2.6 3z"/>
<path d="M697.4 67.6h5.2l-2.6 3z"/><path d="M697.4 91.6h5.2l-2.6 3z"/>
<path d="M794.4 115.6h5.2l-2.6 3z"/>
<!-- panel title arrows -->
<path d="M165.6 139.4h8l-4 4.2z"/><path d="M378.6 139.4h8l-4 4.2z"/><path d="M522 139.4h8l-4 4.2z"/><path d="M691.6 139.4h8l-4 4.2z"/><path d="M770 139.4h8l-4 4.2z"/><path d="M905 139.4h8l-4 4.2z"/>
<path d="M994 140.6h8l-4 4.2z"/><path d="M1055 140.6h8l-4 4.2z"/><path d="M1116 140.6h8l-4 4.2z"/>
<!-- combo arrows -->
<path d="M601 90.6h8l-4 4.4z"/><path d="M601 114.6h8l-4 4.4z"/>
<path d="M953 66.6h8l-4 4.4z"/><path d="M953 90.6h8l-4 4.4z"/><path d="M953 114.6h8l-4 4.4z"/>
</g>
<path d="M962 139v4h-4M961.600 142.600l-4.200-4.200" stroke="#444" stroke-width="1.100" fill="none"/>
<!-- ===== small icons: draw ===== -->
<path d="M231.6 65.4 L245 64.4 L244.6 73 L231.2 74Z" fill="url(#gG)" stroke="#333" stroke-width="1"/>
<rect x="243.4" y="62.8" width="2.8" height="2.8" fill="#fff" stroke="#222" stroke-width=".8"/><rect x="229.8" y="72.4" width="2.8" height="2.8" fill="#fff" stroke="#222" stroke-width=".8"/>
<ellipse cx="237.6" cy="92.8" rx="7" ry="4.6" fill="url(#gG)" stroke="#333" stroke-width="1"/>
<path d="M236 92.8h3.2M237.6 91.2v3.2" stroke="#222" stroke-width=".8"/>
<rect x="236.4" y="86.8" width="2.4" height="2.4" fill="#fff" stroke="#222" stroke-width=".7"/><rect x="243.4" y="91.6" width="2.4" height="2.4" fill="#fff" stroke="#222" stroke-width=".7"/>
<g stroke="#333" stroke-width="1" fill="none"><path d="M230 111.6h16M230 123.4h16M232.2 109v17M243.8 109v17"/></g>
<path d="M233.4 113l9.4 9.4M236.4 112.6l6.6 6.6M239.4 112.6l3.8 3.8M233 116l6.8 6.8M233 119l3.8 3.8" stroke="#555" stroke-width=".8"/>
<path d="M237 126.4l7.6-7.6" stroke="#222" stroke-width=".9"/>
<!-- modify: move -->
<g fill="#333"><path d="M283.9 61.6l3.2 3.6h-6.4z M283.9 76.6l3.2-3.6h-6.4z M276.4 69.1l3.6-3.2v6.4z M291.4 69.1l-3.6-3.2v6.4z"/></g>
<path d="M283.9 64.6v9M279.4 69.1h9" stroke="#333" stroke-width="1.3"/><rect x="282.5" y="67.7" width="2.8" height="2.8" fill="#fff" stroke="#333" stroke-width=".7"/>
<!-- rotate -->
<path d="M316.6 64.2 A6.6 6.6 0 1 1 309.6 64.4" fill="none" stroke="#444" stroke-width="1.4"/><path d="M311.4 60.6l4.4 3-4.6 2.8z" fill="#444"/>
<!-- trim -->
<path d="M333.6 69h4M343.4 69h2M346.6 69h2M349.8 69h1.6" stroke="#2d7ab8" stroke-width="1.1"/><path d="M337.6 74.6L342.8 63.4" stroke="#2d7ab8" stroke-width="1.2"/>
<!-- erase -->
<path d="M375.4 76.4h14.6" stroke="#222" stroke-width="1"/><path d="M381.4 72.6L389.6 62l1.8 1.4L383.4 74.4z" fill="#f0d9b0" stroke="#7a6a50" stroke-width=".6"/><path d="M378 73.4c1-3 3-3.6 4.4-2.6 1.400 1 1.400 3-1 4.400-1.600 .8-3 .4-3.400-1.800z" fill="#b4501e"/>
<!-- copy -->
<circle cx="279" cy="88" r="3.200" fill="#fff" stroke="#555" stroke-width=".9"/><path d="M284.4 87h5.600v3" fill="none" stroke="#111" stroke-width="1.1"/><path d="M288 89.600h4l-2 2.400z" fill="#111"/>
<circle cx="285.600" cy="96.200" r="3.800" fill="#a8d4f0" stroke="#2d7ab8" stroke-width="1"/><circle cx="288.800" cy="97.400" r="3.800" fill="#cfe6f6" fill-opacity=".7" stroke="#2d7ab8" stroke-width="1"/>
<!-- mirror -->
<path d="M312.600 85v16.400" stroke="#222" stroke-width="1.1"/><path d="M310 87.400v10.800h-5z" fill="#f4f4f4" stroke="#444" stroke-width="1"/><path d="M315.200 87.400v10.800h5z" fill="#a8d4f0" stroke="#2d7ab8" stroke-width="1"/>
<!-- fillet -->
<path d="M334.400 100.200v-5.600c.400-5.600 4-9 9.600-9.400h6v15z" fill="url(#gG)" stroke="none"/><path d="M334.400 100.200v-5.600c.400-5.600 4-9 9.600-9.400h6v15h-15.600" fill="none" stroke="#333" stroke-width="1.100" stroke-dasharray="9 1.400"/>
<!-- 3d explode -->
<g fill="#cfe6f6" stroke="#2d7ab8" stroke-width="1"><path d="M378 91.400l4-3.400h8.400l-4 3.400z"/><path d="M378 91.400h8.400v7.600h-8.400z"/><path d="M386.400 91.400l4-3.400v7.400l-4 3.600z"/><path d="M375.600 93.600l-2 1.600v4l2-1M390.400 91l2.600-1.600v6l-2.600 2"/></g>
<!-- stretch -->
<path d="M285 110.400h-8.600v14.600h8.600" fill="none" stroke="#222" stroke-width="1.200"/><path d="M286.600 110.400h3.600l3.400 14.600h-7z" fill="#a8d4f0" stroke="#2d7ab8" stroke-width="1"/><path d="M280.400 120.600h6" stroke="#111" stroke-width="1.200"/><path d="M285.600 118.200l3.400 2.400-3.400 2.400z" fill="#111"/>
<!-- scale -->
<rect x="305.400" y="109.600" width="15.400" height="15.400" fill="url(#gB)" stroke="#2d7ab8" stroke-width="1.100"/><rect x="305.400" y="117" width="8" height="8" fill="url(#gG)" stroke="#333" stroke-width="1.100"/>
<!-- array -->
<rect x="334.600" y="109.800" width="5.800" height="5.800" fill="#fff" stroke="#444" stroke-width="1"/><rect x="343.600" y="109.800" width="5.800" height="5.800" fill="#cfe6f6" stroke="#2d7ab8" stroke-width="1"/><rect x="334.600" y="118.800" width="5.800" height="5.800" fill="#cfe6f6" stroke="#2d7ab8" stroke-width="1"/><rect x="343.600" y="118.800" width="5.800" height="5.800" fill="#cfe6f6" stroke="#2d7ab8" stroke-width="1"/>
<!-- offset -->
<path d="M376.400 124.600h13.600M376.400 124.600c-1.600-2-1-5 2-5.600 0-5 2.600-7.600 5.400-7.600s4 2.600 4 6.600h2.800" fill="none" stroke="#222" stroke-width="1.300"/><path d="M379.600 122.200h10.400M379.600 122.200c.400-1.600 1-2 1.800-2.200 0-4 1-6 2.600-6s2 2 2 6.200h4" fill="none" stroke="#2d7ab8" stroke-width="1.100"/>
<!-- ===== layers panel icons ===== -->
<defs><path id="sh" d="M0 3.200 L3.600 0 L12 0 L8.400 3.200Z"/></defs>
<g fill="#fafafa" stroke="#333" stroke-width=".9">
<use href="#sh" x="407.400" y="70"/><use href="#sh" x="407.400" y="66"/><use href="#sh" x="407.400" y="62"/>
<rect x="416.400" y="67" width="8.400" height="10" rx="1" fill="#fff"/><path d="M418.400 69.600h4.400M418.400 72h4.400M418.400 74.400h4.400" stroke-width=".7"/>
</g>

<g fill="#a8d0f0" stroke="#1a4a7a" stroke-width="1">
<path d="M435.400 74.400l5-4h12.600l-5 4z"/><path d="M435.400 71l5-4h12.600l-5 4z"/><path d="M435.400 67.600l5-4h12.600l-5 4z"/>
<circle cx="445" cy="63.400" r="2.800" fill="#e8f0f8" stroke="#555"/>
</g>
<g fill="#fafafa" stroke="#333" stroke-width=".9">
<use href="#sh" x="464.400" y="70"/><use href="#sh" x="464.400" y="66"/><use href="#sh" x="464.400" y="62"/>
<use href="#sh" x="492" y="72.400"/><use href="#sh" x="492" y="68.400"/><use href="#sh" x="492" y="64.400"/>
<use href="#sh" x="516" y="62"/><use href="#sh" x="516" y="65.600"/>
<use href="#sh" x="541.600" y="62"/><use href="#sh" x="541.600" y="65.600"/><use href="#sh" x="541.600" y="69.200" fill="#cfe6f6" stroke="#2d7ab8"/>
<use href="#sh" x="568" y="64.400" transform="translate(-56.800 -6.400) scale(1.100)"/>
<use href="#sh" x="593" y="64.400"/>
</g>
<use href="#sh" x="516" y="69.600" fill="#a8d4f0" stroke="#2d7ab8" stroke-width=".9" transform="translate(-51.600 -7) scale(1.100)"/>
<path d="M473.400 75.600c1-2.600 3-3 4.400-2.200 1.400 1 1.200 3-1 4-1.600.6-3 .2-3.400-1.800z" fill="#b4501e"/><path d="M477 72.600l3.600-4" stroke="#c89050" stroke-width="1.600"/>
<path d="M494.600 62.600h-4.200" stroke="#111" stroke-width="1.100"/><path d="M491.800 60.400l-2.600 2.200 2.600 2.200z" fill="#111"/><path d="M494.600 62.600c1.600 0 2 .8 2 1.800" fill="none" stroke="#111" stroke-width="1"/>
<path d="M531.800 72.200l-4.400 4.400" stroke="#111" stroke-width="1.200"/><path d="M526.600 73.600v3.800h3.800z" fill="#111"/>
<path d="M552.400 76.400l4.400-4.400" stroke="#111" stroke-width="1.200"/><path d="M557.600 75v-3.800h-3.800z" fill="#111"/>
<g stroke="#2d7ab8" stroke-width="1.300" fill="none"><path d="M580 68.400v9M576.100 70.650l7.800 4.500M576.100 75.150l7.800-4.500"/><circle cx="580" cy="72.900" r="2" fill="#fff" stroke-width=".9"/></g>
<path d="M602.800 69.400c0-2 1.200-3.200 2.800-3.200s2.800 1.200 2.800 3.200c0 1.800-1.400 2.400-1.400 4h-2.800c0-1.600-1.400-2.200-1.400-4z" fill="#e8f2fa" stroke="#4a7090" stroke-width=".8"/><rect x="604.400" y="73.800" width="2.400" height="2.400" fill="#668" />
<!-- layer combo icons -->
<path d="M410.400 116c0-3.200 2-5.200 4.400-5.200s4.400 2 4.400 5.200c0 2.800-2.200 3.800-2.200 6h-4.400c0-2.200-2.200-3.200-2.200-6z" fill="#fbe9a0" stroke="#5a5030" stroke-width=".9"/><path d="M412.800 122.600h4v2c0 .6-.8 1-2 1s-2-.4-2-1z" fill="#ccc" stroke="#444" stroke-width=".7"/>
<circle cx="436" cy="117.600" r="3.800" fill="#fbe9a0" stroke="#5a5030" stroke-width=".9"/>
<path d="M436 110.400v2M436 122.800v2M428.800 117.600h2M441.200 117.600h2M430.900 112.500l1.400 1.400M439.700 121.300l1.400 1.400M430.900 122.700l1.400-1.400M439.700 113.900l1.400-1.400" stroke="#3a3a3a" stroke-width=".9"/>
<path d="M455.400 116.400v-2.400c0-2 1.200-3.200 3-3.200s3 1.200 3 3.200" fill="none" stroke="#2a6aa8" stroke-width="1.500"/><rect x="446.800" y="116.400" width="10.600" height="7.800" fill="#7ab4e4" stroke="#1c5a94" stroke-width="1"/><rect x="451.200" y="118.800" width="1.800" height="3.400" fill="#fff"/>
<rect x="467.500" y="110.900" width="13.600" height="13.600" fill="#fff" stroke="#111" stroke-width="1.300"/>
<!-- ===== annotation panel ===== -->
<path d="M675.600 61.800v13.800M690.600 61.800v13.800M675.600 67.400h15" stroke="#333" stroke-width="1.200" fill="none"/><path d="M675.600 67.400l2.400-1.400v2.800zM690.600 67.400l-2.400-1.400v2.800z" fill="#333"/>
<circle cx="687.600" cy="89.400" r="3.200" fill="url(#gG)" stroke="#333" stroke-width="1"/><path d="M684.400 90.400c-5-.6-5.400 3-7.600 8.400" fill="none" stroke="#333" stroke-width="1.100"/><path d="M675.400 101l.6-4.600 2.800 1.800z" fill="#222"/>
<rect x="675.600" y="109.800" width="15.200" height="14.600" rx="1" fill="#f4f4f4" stroke="#333" stroke-width="1.100"/><rect x="675.600" y="109.800" width="15.200" height="3.600" fill="#6a6e74" stroke="#333" stroke-width="1"/><path d="M675.600 117h15.200M675.600 120.600h15.200M680.600 113.400v11M685.600 113.400v11" stroke="#888" stroke-width=".8"/>
<!-- insert block big -->
<path d="M736.400 62h12l5.400 5.400v16h-17.400z" fill="url(#gG)" stroke="#555" stroke-width="1"/><path d="M748.400 62v5.400h5.400" fill="#eee" stroke="#555" stroke-width=".9"/>
<rect x="725.800" y="70.600" width="19" height="12.600" fill="url(#gG)" stroke="#333" stroke-width="1.100"/>
<circle cx="744.200" cy="82.600" r="6.400" fill="url(#gCirc)" stroke="#444" stroke-width="1"/><path d="M744.200 76.400v6.200h6.200" fill="none" stroke="#bbb" stroke-width=".8"/>
<rect x="724" y="81.400" width="3.400" height="3.400" fill="#fff" stroke="#222" stroke-width=".9"/>
<!-- block small 1,2 -->
<rect x="773.600" y="64.800" width="10" height="6.400" fill="url(#gG)" stroke="#333" stroke-width="1"/><circle cx="784" cy="71.600" r="3" fill="#f4f4f4" stroke="#444" stroke-width=".9"/><rect x="772.400" y="70" width="2.400" height="2.400" fill="#fff" stroke="#222" stroke-width=".7"/>
<rect x="773.600" y="90.600" width="10" height="6.400" fill="url(#gG)" stroke="#333" stroke-width="1"/><circle cx="784" cy="97.400" r="3" fill="#f4f4f4" stroke="#444" stroke-width=".9"/><rect x="772.400" y="95.800" width="2.400" height="2.400" fill="#fff" stroke="#222" stroke-width=".7"/>
<path d="M784.400 84.600l-3.400 4.400h2.600l-1.800 4 4.600-5.200h-2.600l2-3.200z" fill="#f4c020" stroke="#a87808" stroke-width=".4"/>
<!-- block small 3: attribute edit -->
<path d="M771.600 110.600c.4 2 1.800 3 3.600 3.200" fill="none" stroke="#222" stroke-width="1"/><path d="M773.600 113.800h10.600l-1 5-5.600 4.800-4.400-5z" fill="#f8f8f8" stroke="#222" stroke-width="1"/>
<path d="M779.400 118.600l5.600-6 2 1.800-5.600 6-2.600.8z" fill="#f2c13c" stroke="#7a5a10" stroke-width=".6"/>
<!-- ===== properties panel icons ===== -->
<defs><clipPath id="cw"><circle cx="817.800" cy="69" r="7.800"/></clipPath></defs>
<g clip-path="url(#cw)"><rect x="809" y="60" width="18" height="18" fill="#d8d8d8"/>
<path d="M817.800 69L809 62 809 60 817.800 60z" fill="#8ac040"/><path d="M817.800 69L817.800 60 827 60 827 64z" fill="#f0d030"/><path d="M817.800 69L827 64 827 72z" fill="#f08028"/><path d="M817.800 69L827 72 827 78 820 78z" fill="#d83030"/><path d="M817.800 69L820 78 811 78z" fill="#7038a8"/><path d="M817.800 69L811 78 809 78 809 70z" fill="#3858c0"/><path d="M817.800 69L809 70 809 62z" fill="#38a8a0"/>
<circle cx="817.800" cy="69" r="7.800" fill="url(#gCirc)" opacity=".18"/></g>
<circle cx="817.800" cy="69" r="7.800" fill="none" stroke="#777" stroke-width=".6"/>
<g fill="#333"><rect x="810" y="85" width="15.600" height="1"/><rect x="810" y="88" width="15.600" height="2"/><rect x="810" y="92" width="15.600" height="3"/><rect x="810" y="97" width="15.600" height="4"/></g>
<g stroke="#333" stroke-width="1" fill="none"><path d="M810 110.500h15.600" stroke-dasharray="1 1"/><path d="M810 113.500h15.600" stroke-dasharray="3 1 1 1"/><path d="M810 116.500h15.600" stroke-dasharray="2 1"/><path d="M810 119.500h15.600" stroke-dasharray="4 1.500"/><path d="M810 122.500h15.600" stroke-dasharray="3 2"/></g>
<!-- ===== groups ===== -->
<rect x="982.500" y="58.500" width="18" height="31" fill="none" stroke="#34506a" stroke-width="1" stroke-dasharray="2 1.400"/>
<rect x="986.400" y="63" width="10.200" height="9.600" fill="#e8d47a" stroke="#555" stroke-width=".9"/><rect x="987.400" y="64" width="8.200" height="4" fill="#f4e8a8" opacity=".7"/>
<circle cx="991.600" cy="81.600" r="5.200" fill="url(#gCirc)" stroke="#333" stroke-width="1"/>
<path d="M1001 62.400l10.800 11.200-5 .2 3 6.800-2.600 1.200-3-6.800-3.200 3.400z" fill="#fbf8d8" stroke="#4a6a8a" stroke-width="1"/>
<!-- ===== utilities calc ===== -->
<rect x="1049.400" y="59.600" width="20.400" height="27.600" rx="1.600" fill="#f2f2f2" stroke="#444" stroke-width="1.200"/>
<rect x="1053" y="63.400" width="13.200" height="5.200" fill="#7c8088" stroke="#444" stroke-width=".7"/>
<g fill="#5c6068"><rect x="1053" y="73" width="2.600" height="2.600"/><rect x="1056.600" y="73" width="2.600" height="2.600"/><rect x="1060.200" y="73" width="2.600" height="2.600"/><rect x="1063.800" y="73" width="2.600" height="2.600"/>
<rect x="1053" y="77" width="2.600" height="2.600"/><rect x="1056.600" y="77" width="2.600" height="2.600"/><rect x="1060.200" y="77" width="2.600" height="2.600"/><rect x="1063.800" y="77" width="2.600" height="2.600"/>
<rect x="1053" y="81" width="2.600" height="2.600"/><rect x="1056.600" y="81" width="2.600" height="2.600"/><rect x="1060.200" y="81" width="2.600" height="2.600"/><rect x="1063.800" y="81" width="2.600" height="2.600"/></g>
<!-- ===== clipboard ===== -->
<defs><linearGradient id="gClip" x1="0" y1="0" x2="1" y2="0"><stop offset="0" stop-color="#8a867e"/><stop offset="1" stop-color="#dcd8d0"/></linearGradient></defs>
<rect x="1108.400" y="60.400" width="21" height="23.800" rx="1.400" fill="url(#gClip)" stroke="#5a5852" stroke-width="1"/>
<path d="M1113.600 61.600c0-2 2-2 2.600-2 .4-1.600 5-1.600 5.400 0 .6 0 2.600 0 2.600 2z" fill="#f4f4f4" stroke="#666" stroke-width=".8"/>
<path d="M1115.600 67.400h12.400l5 5v14.800h-17.400z" fill="url(#gG)" stroke="#555" stroke-width="1"/><path d="M1128 67.400v5h5z" fill="#fff" stroke="#555" stroke-width=".8"/>
<!-- ===== file tabs ===== -->
<defs><linearGradient id="gTabA" x1="0" y1="0" x2="0" y2="1"><stop offset="0" stop-color="#e6e6e6"/><stop offset="1" stop-color="#c2c2c2"/></linearGradient>
<linearGradient id="gTabI" x1="0" y1="0" x2="0" y2="1"><stop offset="0" stop-color="#a9a9a9"/><stop offset="1" stop-color="#9b9b9b"/></linearGradient></defs>
<path d="M22 177.800 C28 177.800 27 156.500 35 156.500 L150 156.500 C158 156.500 157 177.800 166 177.800Z" fill="url(#gTabI)" stroke="#c4c4c4" stroke-width="1"/>
<path d="M157 177.800 C165 177.800 163 156.500 173 156.500 L308 156.500 C318 156.500 316 177.800 325 177.800Z" fill="url(#gTabA)" stroke="#f0f0f0" stroke-width="1"/>
<path d="M296.400 163.400l6.200 6M302.600 163.400l-6.200 6" stroke="#8a8a8a" stroke-width="1.700"/>
<path d="M323.400 159.400 C330 158.600 338 158.600 341 160 C343.600 163 344.600 170 344.400 173.600 C338 174.600 331 174.600 328 173 C325 169 323.600 164 323.400 159.400Z" fill="#717171" stroke="#b4b4b4" stroke-width=".9"/>
<circle cx="333.600" cy="166.600" r="4.600" fill="#8c8c8c"/><path d="M330.800 166.600h5.600M333.600 163.800v5.600" stroke="#b8b8b8" stroke-width="2"/>
<!-- ===== layout tabs ===== -->
<g fill="#f2f2f2" stroke="#c4c4c4" stroke-width="1"><rect x="8.500" y="652.500" width="14.400" height="15"/><rect x="22.900" y="652.500" width="15" height="15"/><rect x="37.900" y="652.500" width="15" height="15"/><rect x="52.900" y="652.500" width="14.600" height="15"/></g>
<g fill="#808080"><path d="M19.400 655.600v9l-5.600-4.500z"/><rect x="12.400" y="655.600" width="1.500" height="9"/><path d="M33.600 655.600v9l-5.600-4.500z"/><path d="M42.400 655.600v9l5.600-4.500z"/><path d="M56.600 655.600v9l5.600-4.500z"/><rect x="62.200" y="655.600" width="1.500" height="9"/></g>
<path d="M68.400 651.600 L131.600 651.600 L126.400 665.400 L73.600 665.400Z" fill="#202732"/>
<path d="M131.600 652 L126.400 665.400 L122 665.400M177.800 652 L173.400 665.400 L170 665.400M227.300 652 L222.400 665.400 L219 665.400" fill="none" stroke="#222" stroke-width="1"/>

<defs><linearGradient id="gOn" x1="0" y1="0" x2="0" y2="1"><stop offset="0" stop-color="#e2f1f7"/><stop offset=".45" stop-color="#a9cfe0"/><stop offset="1" stop-color="#cfe8f2"/></linearGradient><linearGradient id="gOff" x1="0" y1="0" x2="0" y2="1"><stop offset="0" stop-color="#c2c2c2"/><stop offset="1" stop-color="#9a9a9a"/></linearGradient></defs>
<rect x="193.4" y="670" width="21.95" height="21" fill="url(#gOff)"/>
<path d="M193.9 670V691" stroke="#d0d0d0" stroke-width="1"/><path d="M214.8 670V691" stroke="#6e6e6e" stroke-width="1"/>
<rect x="215.3" y="670" width="21.95" height="21" fill="url(#gOff)"/>
<path d="M215.8 670V691" stroke="#d0d0d0" stroke-width="1"/><path d="M236.8 670V691" stroke="#6e6e6e" stroke-width="1"/>
<rect x="237.3" y="670" width="21.95" height="21" fill="url(#gOn)"/>
<path d="M237.8 670V691" stroke="#f4fafc" stroke-width="1"/><path d="M258.8 670V691" stroke="#5a8096" stroke-width="1"/>
<rect x="259.2" y="670" width="21.95" height="21" fill="url(#gOff)"/>
<path d="M259.8 670V691" stroke="#d0d0d0" stroke-width="1"/><path d="M280.7 670V691" stroke="#6e6e6e" stroke-width="1"/>
<rect x="281.2" y="670" width="21.95" height="21" fill="url(#gOn)"/>
<path d="M281.7 670V691" stroke="#f4fafc" stroke-width="1"/><path d="M302.6 670V691" stroke="#5a8096" stroke-width="1"/>
<rect x="303.1" y="670" width="21.95" height="21" fill="url(#gOn)"/>
<path d="M303.6 670V691" stroke="#f4fafc" stroke-width="1"/><path d="M324.6 670V691" stroke="#5a8096" stroke-width="1"/>
<rect x="325.1" y="670" width="21.95" height="21" fill="url(#gOff)"/>
<path d="M325.6 670V691" stroke="#d0d0d0" stroke-width="1"/><path d="M346.6 670V691" stroke="#6e6e6e" stroke-width="1"/>
<rect x="347.1" y="670" width="21.95" height="21" fill="url(#gOn)"/>
<path d="M347.6 670V691" stroke="#f4fafc" stroke-width="1"/><path d="M368.5 670V691" stroke="#5a8096" stroke-width="1"/>
<rect x="369.0" y="670" width="21.95" height="21" fill="url(#gOn)"/>
<path d="M369.5 670V691" stroke="#f4fafc" stroke-width="1"/><path d="M390.4 670V691" stroke="#5a8096" stroke-width="1"/>
<rect x="390.9" y="670" width="21.95" height="21" fill="url(#gOn)"/>
<path d="M391.4 670V691" stroke="#f4fafc" stroke-width="1"/><path d="M412.4 670V691" stroke="#5a8096" stroke-width="1"/>
<rect x="412.9" y="670" width="21.95" height="21" fill="url(#gOn)"/>
<path d="M413.4 670V691" stroke="#f4fafc" stroke-width="1"/><path d="M434.3 670V691" stroke="#5a8096" stroke-width="1"/>
<rect x="434.9" y="670" width="21.95" height="21" fill="url(#gOn)"/>
<path d="M435.4 670V691" stroke="#f4fafc" stroke-width="1"/><path d="M456.3 670V691" stroke="#5a8096" stroke-width="1"/>
<rect x="456.8" y="670" width="21.95" height="21" fill="url(#gOff)"/>
<path d="M457.3 670V691" stroke="#d0d0d0" stroke-width="1"/><path d="M478.2 670V691" stroke="#6e6e6e" stroke-width="1"/>
<rect x="478.8" y="670" width="21.95" height="21" fill="url(#gOn)"/>
<path d="M479.2 670V691" stroke="#f4fafc" stroke-width="1"/><path d="M500.2 670V691" stroke="#5a8096" stroke-width="1"/>
<rect x="500.7" y="670" width="21.95" height="21" fill="url(#gOff)"/>
<path d="M501.2 670V691" stroke="#d0d0d0" stroke-width="1"/><path d="M522.2 670V691" stroke="#6e6e6e" stroke-width="1"/>
<g stroke="#1a1a1a" stroke-width="1.300" fill="none"><path d="M197.4 678h11M202.9 672.500v11"/><rect x="200.6" y="675.700" width="4.600" height="4.600" stroke-width=".9"/></g><rect x="207.6" y="680.600" width="3.600" height="3.600" fill="#fff" stroke="#2a62b0" stroke-width="1"/><rect x="204.2" y="684.600" width="3.600" height="3.600" fill="#fff" stroke="#c8401c" stroke-width="1"/>
<g fill="#333"><rect x="221.3" y="674.4" width="1.200" height="1.200"/><rect x="221.3" y="677.0" width="1.200" height="1.200"/><rect x="221.3" y="679.6" width="1.200" height="1.200"/><rect x="221.3" y="682.2" width="1.200" height="1.200"/><rect x="223.9" y="674.4" width="1.200" height="1.200"/><rect x="223.9" y="677.0" width="1.200" height="1.200"/><rect x="223.9" y="679.6" width="1.200" height="1.200"/><rect x="223.9" y="682.2" width="1.200" height="1.200"/><rect x="226.5" y="674.4" width="1.200" height="1.200"/><rect x="226.5" y="677.0" width="1.200" height="1.200"/><rect x="226.5" y="679.6" width="1.200" height="1.200"/><rect x="226.5" y="682.2" width="1.200" height="1.200"/><rect x="229.1" y="674.4" width="1.200" height="1.200"/><rect x="229.1" y="677.0" width="1.200" height="1.200"/><rect x="229.1" y="679.6" width="1.200" height="1.200"/><rect x="229.1" y="682.2" width="1.200" height="1.200"/></g><path d="M220.8 685.600h10.600M231.3 674.400v8" stroke="#1a1a1a" stroke-width="1.300"/>
<rect x="240.7" y="672.400" width="15.200" height="15.200" fill="#1e1e1e"/><rect x="241.6" y="673.3" width="2" height="2" fill="#fff"/><rect x="241.6" y="676.2" width="2" height="2" fill="#fff"/><rect x="241.6" y="679.1" width="2" height="2" fill="#fff"/><rect x="241.6" y="682.0" width="2" height="2" fill="#fff"/><rect x="241.6" y="684.9" width="2" height="2" fill="#fff"/><rect x="244.5" y="673.3" width="2" height="2" fill="#fff"/><rect x="244.5" y="676.2" width="2" height="2" fill="#fff"/><rect x="244.5" y="679.1" width="2" height="2" fill="#fff"/><rect x="244.5" y="682.0" width="2" height="2" fill="#fff"/><rect x="244.5" y="684.9" width="2" height="2" fill="#fff"/><rect x="247.4" y="673.3" width="2" height="2" fill="#fff"/><rect x="247.4" y="676.2" width="2" height="2" fill="#fff"/><rect x="247.4" y="679.1" width="2" height="2" fill="#fff"/><rect x="247.4" y="682.0" width="2" height="2" fill="#fff"/><rect x="247.4" y="684.9" width="2" height="2" fill="#fff"/><rect x="250.3" y="673.3" width="2" height="2" fill="#fff"/><rect x="250.3" y="676.2" width="2" height="2" fill="#fff"/><rect x="250.3" y="679.1" width="2" height="2" fill="#fff"/><rect x="250.3" y="682.0" width="2" height="2" fill="#fff"/><rect x="250.3" y="684.9" width="2" height="2" fill="#fff"/><rect x="253.2" y="673.3" width="2" height="2" fill="#fff"/><rect x="253.2" y="676.2" width="2" height="2" fill="#fff"/><rect x="253.2" y="679.1" width="2" height="2" fill="#fff"/><rect x="253.2" y="682.0" width="2" height="2" fill="#fff"/><rect x="253.2" y="684.9" width="2" height="2" fill="#fff"/>
<path d="M263.2 672.500V687.500H278.2" fill="none" stroke="#333" stroke-width="1.200"/><path d="M263.2 681.500h5.600v6" fill="none" stroke="#555" stroke-width=".9"/>
<path d="M294.8 677.400A5.400 5.400 0 1 0 295.6 684.600" fill="none" stroke="#2a5a78" stroke-width="1.200"/><path d="M289.6 682.400L298.6 674.600M289.6 682.400H299.2" stroke="#1a1a1a" stroke-width="1.300"/>
<rect x="307.7" y="674.400" width="13.200" height="12.600" fill="#f2f6fa" stroke="#2a2a2a" stroke-width="1.200"/><circle cx="307.7" cy="674.400" r="2.300" fill="#fff" stroke="#d8501c" stroke-width="1.200"/>
<path d="M330.5 677l3.600-4h10v10l-3.600 4" fill="#e8e8e8" stroke="#333" stroke-width="1.100"/><rect x="330.5" y="677" width="10" height="10" rx="1.500" fill="#f4f4f4" stroke="#333" stroke-width="1.100"/><path d="M340.5 677l3.600-4" stroke="#333" stroke-width="1"/><circle cx="330.5" cy="686.600" r="2.300" fill="#fff" stroke="#d8501c" stroke-width="1.200"/>
<path d="M364.0 675L352.4 685.400H364.6" fill="none" stroke="#1a1a1a" stroke-width="1.400"/>
<path d="M373.0 673v14.400h14.600M373.0 687.400l11-11" fill="none" stroke="#1a3a4a" stroke-width="1.200"/><path d="M371.0 675l2-3 2 3zM386.0 685.400l3 2-3 2z" fill="#1a3a4a"/><path d="M387.0 671l-3.600 4h2.400l-1.400 3.600 4.400-4.800h-2.400l1.600-2.800z" fill="#f4c020" stroke="#a87808" stroke-width=".4"/>
<path d="M395.3 677.600h8M399.3 673.400v8.400" stroke="#1a1a1a" stroke-width="1.500"/><rect x="401.3" y="681" width="6.400" height="3.200" fill="#fff" stroke="#1a1a1a" stroke-width="1.100"/>
<path d="M417.3 680h12.400" stroke="#1a1a1a" stroke-width="1.400"/><path d="M423.9 673.400v13.600" stroke="#1a1a1a" stroke-width="2.600"/>
<rect x="438.2" y="672.800" width="15.200" height="15.200" fill="#c4def4" stroke="#2a6ab8" stroke-width="1.200"/><rect x="439.2" y="673.8" width="1.900" height="1.900" fill="#6aa6e4"/><rect x="439.2" y="677.6" width="1.900" height="1.900" fill="#6aa6e4"/><rect x="439.2" y="681.4" width="1.900" height="1.900" fill="#6aa6e4"/><rect x="439.2" y="685.2" width="1.900" height="1.900" fill="#6aa6e4"/><rect x="441.1" y="675.7" width="1.900" height="1.900" fill="#6aa6e4"/><rect x="441.1" y="679.5" width="1.900" height="1.900" fill="#6aa6e4"/><rect x="441.1" y="683.3" width="1.900" height="1.900" fill="#6aa6e4"/><rect x="443.0" y="673.8" width="1.900" height="1.900" fill="#6aa6e4"/><rect x="443.0" y="677.6" width="1.900" height="1.900" fill="#6aa6e4"/><rect x="443.0" y="681.4" width="1.900" height="1.900" fill="#6aa6e4"/><rect x="443.0" y="685.2" width="1.900" height="1.900" fill="#6aa6e4"/><rect x="444.9" y="675.7" width="1.900" height="1.900" fill="#6aa6e4"/><rect x="444.9" y="679.5" width="1.900" height="1.900" fill="#6aa6e4"/><rect x="444.9" y="683.3" width="1.900" height="1.900" fill="#6aa6e4"/><rect x="446.8" y="673.8" width="1.900" height="1.900" fill="#6aa6e4"/><rect x="446.8" y="677.6" width="1.900" height="1.900" fill="#6aa6e4"/><rect x="446.8" y="681.4" width="1.900" height="1.900" fill="#6aa6e4"/><rect x="446.8" y="685.2" width="1.900" height="1.900" fill="#6aa6e4"/><rect x="448.7" y="675.7" width="1.900" height="1.900" fill="#6aa6e4"/><rect x="448.7" y="679.5" width="1.900" height="1.900" fill="#6aa6e4"/><rect x="448.7" y="683.3" width="1.900" height="1.900" fill="#6aa6e4"/><rect x="450.6" y="673.8" width="1.900" height="1.900" fill="#6aa6e4"/><rect x="450.6" y="677.6" width="1.900" height="1.900" fill="#6aa6e4"/><rect x="450.6" y="681.4" width="1.900" height="1.900" fill="#6aa6e4"/><rect x="450.6" y="685.2" width="1.900" height="1.900" fill="#6aa6e4"/>
<rect x="464.2" y="675" width="7.600" height="10.600" fill="#fff" stroke="#111" stroke-width="1.500"/><path d="M465.8 678h1.600M468.4 678h2M465.8 680.400h1.600M468.4 680.400h2M465.8 682.800h1.600M468.4 682.800h2" stroke="#222" stroke-width="1.100"/>
<path d="M481.7 675.400h6M484.7 672.400v6" stroke="#1a3a4a" stroke-width="1.300"/><rect x="486.7" y="677.400" width="7.400" height="7.400" rx="1" fill="#f4f4f4" stroke="#333" stroke-width="1"/><rect x="489.3" y="680.400" width="7.400" height="7.400" rx="1" fill="#6ab04c" stroke="#2a5a1a" stroke-width="1"/>
<path d="M509.3 672.600h4.800v5h5v4.800h-5v5h-4.800v-5h-5v-4.800h5z" fill="#fafafa" stroke="#444" stroke-width="1.100"/>
<rect x="797.600" y="670" width="54" height="21" fill="url(#gOff)"/><path d="M798 670V691" stroke="#d4d4d4"/><path d="M851.400 670V691" stroke="#6e6e6e"/>
<path d="M852.400 670V691M873.400 670V691" stroke="#d4d4d4"/><path d="M872.400 670V691M895.400 670V691" stroke="#6e6e6e"/>
<rect x="855.400" y="672.600" width="13.200" height="11.800" fill="#fbfbfb" stroke="#222" stroke-width="1.200"/><path d="M858.400 675v7h6.600z" fill="none" stroke="#222" stroke-width="1.100"/><path d="M854 687.400h16.400" stroke="#222" stroke-width="1.300"/>
<rect x="876.400" y="672.600" width="7" height="8.400" fill="#fbfbfb" stroke="#333" stroke-width="1"/><rect x="884.600" y="672.600" width="7" height="8.400" fill="#fbfbfb" stroke="#333" stroke-width="1"/><path d="M876 685.600h16" stroke="#444" stroke-width="2.600" stroke-linecap="round"/>
<rect x="897" y="670" width="10" height="21" fill="#747474"/><rect x="1002.800" y="670" width="5.400" height="21" fill="#747474"/>
<rect x="907" y="670" width="51.400" height="21" fill="url(#gOff)"/><path d="M907.500 670V691M959.400 670V691M980.400 670V691" stroke="#d4d4d4"/><path d="M958.400 670V691M979.400 670V691M1001.800 670V691" stroke="#6e6e6e"/>
<path d="M0 -7.400 L1.700 -1.200 L7 6.400 L0 1.400 L-7 6.400 L-1.700 -1.200Z" transform="translate(918.400 680.400)" fill="#fcfcfc" stroke="#333" stroke-width=".9"/>
<path d="M945.700 677.400h7.600l-3.800 4.200z" fill="#111"/>
<path d="M0 -7.400 L1.700 -1.200 L7 6.400 L0 1.400 L-7 6.400 L-1.700 -1.200Z" transform="translate(968.400 680.400)" fill="#fcfcfc" stroke="#333" stroke-width=".9"/><circle cx="973.600" cy="681.600" r="3" fill="#f8d048" stroke="#b88a18" stroke-width=".6"/><rect x="972.400" y="684.600" width="2.400" height="2.600" fill="#eee" stroke="#666" stroke-width=".5"/>
<path d="M0 -7.400 L1.700 -1.200 L7 6.400 L0 1.400 L-7 6.400 L-1.700 -1.200Z" transform="translate(991 680.400)" fill="#b4b4b4" stroke="#8c8c8c" stroke-width=".9"/><path d="M987.600 673.400l3 2.400M994.400 675.600l1.600-2.600" stroke="#c8c8c8" stroke-width="1"/>
<g transform="translate(1018.400 679.400)"><path d="M-1.500-8h3l.6 2 1.700.7 1.800-1 2.100 2.100-1 1.800.7 1.700 2 .6v3l-2 .6-.7 1.700 1 1.800-2.100 2.100-1.800-1-1.700.7-.6 2h-3l-.6-2-1.700-.7-1.800 1-2.100-2.100 1-1.800-.7-1.700-2-.6v-3l2-.6.7-1.700-1-1.800 2.100-2.100 1.800 1 1.700-.7z" fill="#fbfbfb" stroke="#2a2a2a" stroke-width="1"/><circle r="3" fill="#a8a8a8" stroke="#2a2a2a" stroke-width="1"/></g><path d="M1026.400 684v4h-4z" fill="#111"/>
<path d="M1009 670V691M1030.400 670V691M1052.400 670V691" stroke="#d4d4d4"/><path d="M1029.400 670V691M1051.400 670V691M1073.400 670V691" stroke="#6e6e6e"/>
<path d="M1042.400 679.400v-3c0-2.400 1.400-3.600 3-3.600s3 1.200 3 3.600v1" fill="none" stroke="#2a2a2a" stroke-width="3"/><path d="M1042.400 679.400v-3c0-2.400 1.400-3.600 3-3.600s3 1.200 3 3.600v1" fill="none" stroke="#fbfbfb" stroke-width="1.400"/><rect x="1034" y="679" width="11.600" height="8.400" fill="#fbfbfb" stroke="#2a2a2a" stroke-width="1.100"/><rect x="1039" y="681" width="1.800" height="4.400" fill="#333"/>
<circle cx="1062.500" cy="679.700" r="6.600" fill="#8a8a8a" stroke="#a8a8a8" stroke-width="1"/><path d="M1059 676l4.400 5" stroke="#e8e8e8" stroke-width="1.600"/><path d="M1062.400 674.600v1.400M1066 676.600l-1 1" stroke="#d0d0d0" stroke-width=".9"/>
<rect x="1074.600" y="670" width="55" height="21" fill="#767676"/><rect x="1080.700" y="672.700" width="43" height="15.200" fill="#9c9c9c" stroke="#5e5e5e" stroke-width=".8"/>
<path d="M1084.400 673.600h8l3 3v10h-11z" fill="#3a78c8" stroke="#1a3a6a" stroke-width=".8"/><rect x="1084.400" y="680.400" width="9" height="6.400" fill="#f0c838" stroke="#8a6a10" stroke-width=".6"/><circle cx="1087" cy="676" r="1.800" fill="#fff" stroke="#1a3a6a" stroke-width=".7"/><path d="M1091 683.600l2.600 3 5-6" fill="none" stroke="#2a9a2a" stroke-width="2"/>
<path d="M1107 678.600c0-3.200 2.200-5.200 5-5.200s5 2 5 5.200c0 2.800-2.600 3.800-2.600 6h-4.800c0-2.200-2.600-3.200-2.600-6z" fill="#fbeaa8" stroke="#8a7a40" stroke-width=".7"/><rect x="1110.400" y="684.600" width="3.200" height="3.600" fill="#f4f4f4" stroke="#666" stroke-width=".6"/>
<rect x="1130.600" y="670" width="10.600" height="21" fill="url(#gOff)"/><path d="M1131 670V691" stroke="#d4d4d4"/><path d="M1141 670V691" stroke="#6e6e6e"/><path d="M1133.600 679.600h5.400l-2.700 3.400z" fill="#111"/>
<rect x="1145.500" y="673" width="13.500" height="13" fill="#f8f8f8" stroke="#333" stroke-width="1.100"/><rect x="1145.500" y="673" width="13.500" height="3" fill="#444"/>
<g fill="#f0f0f0"><rect x="1175" y="680" width="2" height="2"/><rect x="1172" y="683.400" width="2" height="2"/><rect x="1175" y="683.400" width="2" height="2"/><rect x="1169" y="686.800" width="2" height="2"/><rect x="1172" y="686.800" width="2" height="2"/><rect x="1175" y="686.800" width="2" height="2"/></g>
</svg>
<span class="t" style="left:265.0px;top:13px;font-family:'Liberation Sans', sans-serif;font-size:12.5px;line-height:14px;color:#000;transform:scaleX(0.9566);">Рисование и аннотации</span>
<span class="t" style="left:480.4px;top:10px;font-family:'Liberation Sans', sans-serif;font-size:12.5px;line-height:14px;color:#000;transform:scaleX(0.9231);text-shadow:0 0 5px rgba(255,255,255,.9),0 0 9px rgba(255,255,255,.8),0 0 12px rgba(255,255,255,.6);">ДЗ разд 4 - Решение.d...</span>
<span class="t" style="left:631.0px;top:14px;font-family:'Liberation Sans', sans-serif;font-size:12px;line-height:14px;color:#7a7a7a;transform:scaleX(0.8885);font-style:italic;">Введите ключевое слово/фразу</span>
<span class="t" style="left:856.3px;top:14px;font-family:'Liberation Sans', sans-serif;font-size:12.5px;line-height:14px;color:#ffffff;transform:scaleX(0.9335);">Вход в службы</span>
<span class="t" style="left:61.9px;top:36px;font-family:'Liberation Sans', sans-serif;font-size:12.5px;line-height:14px;color:#333;transform:scaleX(0.8912);">Главная</span>
<span class="t" style="left:125.5px;top:36px;font-family:'Liberation Sans', sans-serif;font-size:12.5px;line-height:14px;color:#ffffff;transform:scaleX(0.8866);">Вставка</span>
<span class="t" style="left:187.4px;top:36px;font-family:'Liberation Sans', sans-serif;font-size:12.5px;line-height:14px;color:#ffffff;transform:scaleX(0.9618);">Аннотации</span>
<span class="t" style="left:268.2px;top:36px;font-family:'Liberation Sans', sans-serif;font-size:12.5px;line-height:14px;color:#ffffff;transform:scaleX(0.9569);">Лист</span>
<span class="t" style="left:314.4px;top:36px;font-family:'Liberation Sans', sans-serif;font-size:12.5px;line-height:14px;color:#ffffff;transform:scaleX(0.9325);">Параметризация</span>
<span class="t" style="left:427.5px;top:36px;font-family:'Liberation Sans', sans-serif;font-size:12.5px;line-height:14px;color:#ffffff;transform:scaleX(0.8619);">Вид</span>
<span class="t" style="left:467.4px;top:36px;font-family:'Liberation Sans', sans-serif;font-size:12.5px;line-height:14px;color:#ffffff;transform:scaleX(0.9410);">Управление</span>
<span class="t" style="left:553.8px;top:36px;font-family:'Liberation Sans', sans-serif;font-size:12.5px;line-height:14px;color:#ffffff;transform:scaleX(0.9022);">Вывод</span>
<span class="t" style="left:608.3px;top:36px;font-family:'Liberation Sans', sans-serif;font-size:12.5px;line-height:14px;color:#ffffff;transform:scaleX(0.9721);">Подключаемые модули</span>
<span class="t" style="left:761.6px;top:36px;font-family:'Liberation Sans', sans-serif;font-size:12.5px;line-height:14px;color:#ffffff;transform:scaleX(0.9077);">Autodesk 360</span>
<span class="t" style="left:852.5px;top:36px;font-family:'Liberation Sans', sans-serif;font-size:12.5px;line-height:14px;color:#ffffff;transform:scaleX(0.9615);">Активные приложения</span>
<span class="t" style="left:13.5px;top:96px;font-family:'Liberation Sans', sans-serif;font-size:12px;line-height:14px;color:#3a3a3a;transform:scaleX(0.9841);">Отрезок</span>
<span class="t" style="left:65.0px;top:96px;font-family:'Liberation Sans', sans-serif;font-size:12px;line-height:14px;color:#3a3a3a;">Полилиния</span>
<span class="t" style="left:142.5px;top:96px;font-family:'Liberation Sans', sans-serif;font-size:12px;line-height:14px;color:#3a3a3a;transform:scaleX(1.0248);">Круг</span>
<span class="t" style="left:189.3px;top:96px;font-family:'Liberation Sans', sans-serif;font-size:12px;line-height:14px;color:#3a3a3a;transform:scaleX(0.9767);">Дуга</span>
<span class="t" style="left:629.4px;top:96px;font-family:'Liberation Sans', sans-serif;font-size:12px;line-height:14px;color:#3a3a3a;transform:scaleX(0.9795);">Текст</span>
<span class="t" style="left:715.5px;top:96px;font-family:'Liberation Sans', sans-serif;font-size:12px;line-height:14px;color:#3a3a3a;transform:scaleX(0.9297);">Вставить</span>
<span class="t" style="left:977.0px;top:94px;font-family:'Liberation Sans', sans-serif;font-size:12px;line-height:14px;color:#3a3a3a;transform:scaleX(1.0379);">Группы</span>
<span class="t" style="left:1036.0px;top:94px;font-family:'Liberation Sans', sans-serif;font-size:12px;line-height:14px;color:#3a3a3a;transform:scaleX(0.9757);">Утилиты</span>
<span class="t" style="left:1101.6px;top:94px;font-family:'Liberation Sans', sans-serif;font-size:12px;line-height:14px;color:#3a3a3a;transform:scaleX(0.9218);">Буфе...</span>
<span class="t" style="left:630.0px;top:56px;font-family:'Liberation Sans', sans-serif;font-size:38px;line-height:42px;color:#333;transform:scaleX(1.0647);">A</span>
<span class="t" style="left:101.0px;top:134px;font-family:'Liberation Sans', sans-serif;font-size:12px;line-height:14px;color:#3a3a3a;transform:scaleX(0.9762);">Рисование</span>
<span class="t" style="left:284.6px;top:134px;font-family:'Liberation Sans', sans-serif;font-size:12px;line-height:14px;color:#3a3a3a;transform:scaleX(0.9724);">Редактирование</span>
<span class="t" style="left:487.6px;top:134px;font-family:'Liberation Sans', sans-serif;font-size:12px;line-height:14px;color:#3a3a3a;transform:scaleX(0.9388);">Слои</span>
<span class="t" style="left:624.8px;top:134px;font-family:'Liberation Sans', sans-serif;font-size:12px;line-height:14px;color:#3a3a3a;transform:scaleX(1.0203);">Аннотации</span>
<span class="t" style="left:737.4px;top:134px;font-family:'Liberation Sans', sans-serif;font-size:12px;line-height:14px;color:#3a3a3a;transform:scaleX(0.9809);">Блок</span>
<span class="t" style="left:848.5px;top:134px;font-family:'Liberation Sans', sans-serif;font-size:12px;line-height:14px;color:#3a3a3a;transform:scaleX(0.9392);">Свойства</span>
<span class="t" style="left:407.0px;top:86px;font-family:'Liberation Sans', sans-serif;font-size:12px;line-height:14px;color:#3a3a3a;transform:scaleX(0.9802);">Несохраненное состояние листа</span>
<span class="t" style="left:486.6px;top:110px;font-family:'Liberation Sans', sans-serif;font-size:12px;line-height:14px;color:#3a3a3a;transform:scaleX(0.9906);">Основные</span>
<span class="t" style="left:849.0px;top:62px;font-family:'Liberation Sans', sans-serif;font-size:12px;line-height:14px;color:#3a3a3a;transform:scaleX(1.0196);">ПоСлою</span>
<span class="t" style="left:898.0px;top:86px;font-family:'Liberation Sans', sans-serif;font-size:12px;line-height:14px;color:#3a3a3a;transform:scaleX(1.0690);">ПоСлок</span>
<span class="t" style="left:898.0px;top:110px;font-family:'Liberation Sans', sans-serif;font-size:12px;line-height:14px;color:#3a3a3a;transform:scaleX(0.9617);">ПоСл...</span>
<span class="t" style="left:38.7px;top:160px;font-family:'Liberation Sans', sans-serif;font-size:12px;line-height:14px;color:#505050;">Черчение фигур*</span>
<span class="t" style="left:174.3px;top:160px;font-family:'Liberation Sans', sans-serif;font-size:12px;line-height:14px;color:#161616;transform:scaleX(0.9714);">ДЗ разд 4 - Решение</span>
<span class="t" style="left:80.8px;top:653px;font-family:'Liberation Sans', sans-serif;font-size:12px;line-height:14px;color:#ffffff;transform:scaleX(0.8589);">Модель</span>
<span class="t" style="left:135.8px;top:653px;font-family:'Liberation Sans', sans-serif;font-size:12px;line-height:14px;color:#000;transform:scaleX(0.9130);">Лист1</span>
<span class="t" style="left:183.4px;top:653px;font-family:'Liberation Sans', sans-serif;font-size:12px;line-height:14px;color:#000;transform:scaleX(0.9496);">Лист2</span>
<span class="t" style="left:19.0px;top:675px;font-family:'Liberation Sans', sans-serif;font-size:11.5px;line-height:12px;color:#000;transform:scaleX(0.9283);">1024.2742,  -254.5382 , 0.0000</span>
<span class="t" style="left:800.4px;top:674px;font-family:'Liberation Sans', sans-serif;font-size:12px;line-height:14px;color:#000;transform:scaleX(0.9185);">МОДЕЛЬ</span>
<span class="t" style="left:928.9px;top:674px;font-family:'Liberation Sans', sans-serif;font-size:12px;line-height:14px;color:#000;transform:scaleX(0.8090);">1:1</span>
<span class="t" style="left:332.0px;top:630px;font-family:'Liberation Mono', monospace;font-size:12px;line-height:14px;color:#7c7c7c;transform:scaleX(0.9627);font-style:italic;">Введите команду</span>
<span class="t" style="left:1030.0px;top:13px;font-family:'Liberation Sans', sans-serif;font-size:12px;line-height:14px;color:#fff;transform:scaleX(0.8170);font-weight:bold;">?</span>
<svg class="ov" width="1188" height="700" viewBox="0 0 1188 700">
<!-- red annotation stroke under layers -->
<path d="M406.500 134 C440 134.400 470 136 500 136.200 C540 136.400 580 136.800 619 136" fill="none" stroke="#ee1c10" stroke-width="4" stroke-linecap="round"/>
<!-- faded squiggle -->
<path d="M620 161.600 C623 162.400 625 160.400 627.400 160 C630 159.600 631.400 158.400 634 157.400" fill="none" stroke="#8a4a58" stroke-width="2" stroke-linecap="round" opacity=".9"/>
<!-- pencil cursor -->
<g transform="translate(627.600 136.400) rotate(43.500)">
<path d="M0 0 L5 -3.500 L29.400 -3.500 L29.400 3.500 L5 3.500Z" fill="#fff" stroke="#000" stroke-width="1.500" stroke-linejoin="round"/>
<path d="M0 0 L2.600 -1.800 L2.600 1.800Z" fill="#000"/>
<path d="M5 -3.500V3.500M23.600 -3.500V3.500" stroke="#000" stroke-width="1.300"/>
<path d="M5 -1.200H23.600M5 1.200H23.600" stroke="#000" stroke-width="1"/>
</g>

</svg>
<span class="t" style="left:949.5px;top:625px;font-family:'Liberation Serif', serif;font-size:17.5px;line-height:20px;color:rgba(0,0,0,.55);transform:scaleX(1.0962);">Автор: Максим Фартусов</span>
<span class="t" style="left:949.5px;top:649px;font-family:'Liberation Serif', serif;font-size:17.5px;line-height:20px;color:rgba(0,0,0,.55);transform:scaleX(1.0993);">Сайт:   autocad-prosto.ru</span>
<div id="corner-mask" style="left:0;top:0;width:1188px;height:700px;border-radius:7px;box-shadow:0 0 0 12px #0c121a;pointer-events:none;"></div>
</div>
</body></html>
